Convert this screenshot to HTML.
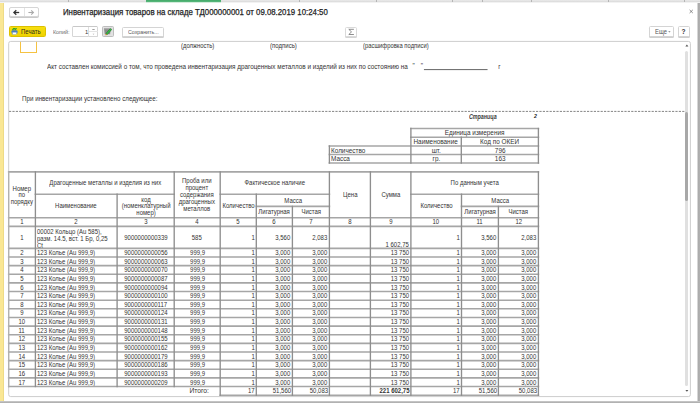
<!DOCTYPE html><html><head><meta charset="utf-8"><style>
html,body{margin:0;padding:0;width:700px;height:403px;overflow:hidden;background:#fff;font-family:"Liberation Sans", sans-serif;color:#333333;}
div{box-sizing:border-box;}
</style></head><body>
<div style="position:absolute;left:0px;top:0px;width:700px;height:3px;background:linear-gradient(#ebebeb 0,#d9d9d9 67%,#f0f0f0 67%,#f4f4f4 100%);"></div>
<div style="position:absolute;left:68px;top:0px;width:1px;height:2px;background:#b5b5b5;"></div>
<div style="position:absolute;left:299px;top:0px;width:1px;height:2px;background:#b5b5b5;"></div>
<div style="position:absolute;left:376px;top:0px;width:1px;height:2px;background:#b5b5b5;"></div>
<div style="position:absolute;left:452px;top:0px;width:1px;height:2px;background:#b5b5b5;"></div>
<div style="position:absolute;left:482px;top:0px;width:1px;height:2px;background:#b5b5b5;"></div>
<div style="position:absolute;left:531px;top:0px;width:1px;height:2px;background:#b5b5b5;"></div>
<div style="position:absolute;left:608px;top:0px;width:1px;height:2px;background:#b5b5b5;"></div>
<div style="position:absolute;left:684px;top:0px;width:1px;height:2px;background:#b5b5b5;"></div>
<div style="position:absolute;left:146px;top:0px;width:75px;height:3px;background:linear-gradient(#42a968 0,#5ab97d 67%,#c6e6d1 67%,#dff1e5 100%);"></div>
<div style="position:absolute;left:0px;top:3px;width:4px;height:398px;background:linear-gradient(90deg,#fae794 0,#fae794 75%,#eedb86 75%);"></div>
<div style="position:absolute;left:697px;top:3px;width:3px;height:400px;background:linear-gradient(90deg,#d6d6d6 0,#d6d6d6 33%,#aaaaaa 33%,#b0b0b0 100%);"></div>
<div style="position:absolute;left:0px;top:401px;width:700px;height:2px;background:linear-gradient(#cdcdcd,#a8a8a8);"></div>
<div style="position:absolute;left:9px;top:7px;width:30px;height:10px;border:1px solid #d6d6d6;border-radius:2px;background:#fff;box-shadow:0 1px 0 #c9c9c9;"></div>
<div style="position:absolute;left:24px;top:8px;width:1px;height:8px;background:#e4e4e4;"></div>
<svg style="position:absolute;left:0;top:0" width="40" height="20" viewBox="0 0 40 20"><path d="M14 12.5 H19.2" stroke="#333" stroke-width="1.3"/><path d="M16.3 10.2 L13.9 12.5 L16.3 14.8" stroke="#333" stroke-width="1.3" fill="none"/><path d="M28.4 12.5 H33.4" stroke="#aaa" stroke-width="1.1"/><path d="M31.2 10.4 L33.4 12.5 L31.2 14.6" stroke="#aaa" stroke-width="1.1" fill="none"/></svg>
<div style="position:absolute;left:62.5px;top:7.6px;white-space:nowrap;font-size:8.6px;line-height:9.89px;transform:scaleX(0.91);transform-origin:0 0;color:#1e1e1e;-webkit-text-stroke:0.25px #1e1e1e;">Инвентаризация товаров на складе ТД000000001 от 09.08.2019 10:24:50</div>
<svg style="position:absolute;left:680px;top:0" width="20" height="20" viewBox="680 0 20 20"><path d="M689.6 9.9 L692.8 13 M692.8 9.9 L689.6 13" stroke="#707070" stroke-width="0.8"/></svg>
<div style="position:absolute;left:9px;top:26px;width:37px;height:11px;background:linear-gradient(#f7df0f,#efd200);border:1px solid #dcc000;border-radius:1.5px;"></div>
<svg style="position:absolute;left:11px;top:28px" width="7" height="7" viewBox="0 0 7 7"><rect x="0.5" y="2.2" width="6" height="3.6" rx="1" fill="#4a7fc1"/><rect x="1.6" y="4.2" width="3.8" height="2.3" fill="#fff" stroke="#7a9bc8" stroke-width="0.4"/><path d="M1.5 2 L3 0.2 L4.2 1.4 L5.6 0.2" stroke="#2ca02c" stroke-width="1.2" fill="none"/></svg>
<div style="position:absolute;left:20.6px;top:28.2px;white-space:nowrap;font-size:6.8px;line-height:7.82px;transform:scaleX(0.88);transform-origin:0 0;color:#2e2c1c;">Печать</div>
<div style="position:absolute;left:53.3px;top:28.4px;white-space:nowrap;font-size:6.1px;line-height:7.01px;transform:scaleX(0.88);transform-origin:0 0;color:#6a6a6a;">Копий:</div>
<div style="position:absolute;left:72px;top:26px;width:26px;height:11px;border:1px solid #d6d6d6;border-top-color:#c8c8c8;border-radius:1.5px;background:#fff;"></div>
<div style="position:absolute;left:88.4px;top:27px;width:1px;height:10px;background:#dedede;"></div>
<div style="position:absolute;left:89px;top:31.3px;width:8.5px;height:1px;background:#e4e4e4;"></div>
<div style="position:absolute;left:85.4px;top:28.3px;white-space:nowrap;font-size:6.1px;line-height:7.01px;transform:scaleX(0.95);transform-origin:0 0;color:#3a3a3a;">1</div>
<svg style="position:absolute;left:89px;top:27px" width="9" height="10" viewBox="0 0 9 10"><path d="M3.3 2.0 H5.7 V2.8 H3.3Z" fill="#8a8a8a"/><path d="M3.6 6.8 L4.5 7.7 L5.4 6.8Z" fill="#aaa"/></svg>
<div style="position:absolute;left:101.6px;top:26px;width:12.2px;height:11px;border:1px solid #bdbdbd;border-radius:1.5px;background:#e2e2e2;"></div>
<svg style="position:absolute;left:103px;top:27px" width="10" height="10" viewBox="0 0 10 10"><path d="M1 1.2 H7.8 L7.1 7.2 H1.7 Z" fill="#8c8c8c"/><path d="M1.2 1.2 H7.6 L7.5 2.2 H1.3Z" fill="#b0b0b0"/><path d="M3.8 6.8 L7.7 2.5" stroke="#1f7a2a" stroke-width="2.1" stroke-linecap="round"/><path d="M3.9 6.7 L7.6 2.6" stroke="#3cc24c" stroke-width="1.1" stroke-linecap="round"/><path d="M2.6 8.2 L3.6 7" stroke="#d98a2a" stroke-width="1.1"/></svg>
<div style="position:absolute;left:122px;top:26.5px;width:42.2px;height:10.5px;border:1px solid #d4d4d4;border-radius:1.5px;background:#fff;box-shadow:0 1px 0 #cfcfcf;"></div>
<div style="position:absolute;left:128px;top:28.6px;white-space:nowrap;font-size:5.8px;line-height:6.67px;transform:scaleX(0.91);transform-origin:0 0;color:#555;">Сохранить...</div>
<div style="position:absolute;left:345.3px;top:26.5px;width:12px;height:10.5px;border:1px solid #dadada;border-radius:1.5px;background:#fff;box-shadow:0 1px 0 #d4d4d4;"></div>
<svg style="position:absolute;left:0;top:0" width="400" height="40" viewBox="0 0 400 40"><path d="M353.9 29.3 H348.8 L351.5 31.9 L348.8 34.5 H353.9" stroke="#7a7a7a" stroke-width="0.85" fill="none"/></svg>
<div style="position:absolute;left:649.4px;top:26.3px;width:24.6px;height:10.4px;border:1px solid #d4d4d4;border-radius:1.5px;background:#fff;box-shadow:0 1px 0 #cfcfcf;"></div>
<div style="position:absolute;left:655px;top:28.2px;white-space:nowrap;font-size:6.4px;line-height:7.36px;transform:scaleX(0.92);transform-origin:0 0;color:#555;">Еще</div>
<svg style="position:absolute;left:667px;top:30px" width="5" height="4" viewBox="0 0 5 4"><path d="M1.2 1.2 H3.6 L2.4 2.6Z" fill="#777"/></svg>
<div style="position:absolute;left:678px;top:26.3px;width:11.8px;height:10.4px;border:1px solid #d4d4d4;border-radius:1.5px;background:#fff;box-shadow:0 1px 0 #cfcfcf;"></div>
<div style="position:absolute;left:681.6px;top:28px;white-space:nowrap;font-size:6.6px;line-height:7.59px;color:#333;font-weight:bold;">?</div>
<div style="position:absolute;left:685.4px;top:51px;width:3px;height:334.5px;background:#e0e0e0;border-radius:1.5px;"></div>
<div style="position:absolute;left:685.4px;top:112px;width:3px;height:89px;background:#a8a8a8;border-radius:1.5px;"></div>
<div style="position:absolute;left:20px;top:41px;width:17px;height:11.8px;border:1px solid #f5c242;border-top:none;"></div>
<div style="position:absolute;left:180.6px;top:42.3px;white-space:nowrap;font-size:6.5px;line-height:7.47px;transform:scaleX(0.91);transform-origin:0 0;">(должность)</div>
<div style="position:absolute;left:269.8px;top:42.3px;white-space:nowrap;font-size:6.5px;line-height:7.47px;transform:scaleX(0.93);transform-origin:0 0;">(подпись)</div>
<div style="position:absolute;left:362.9px;top:42.3px;white-space:nowrap;font-size:6.5px;line-height:7.47px;transform:scaleX(0.9);transform-origin:0 0;">(расшифровка подписи)</div>
<div style="position:absolute;left:47.1px;top:62.8px;white-space:nowrap;font-size:7.7px;line-height:8.85px;transform:scaleX(0.824);transform-origin:0 0;">Акт составлен комиссией о том, что проведена инвентаризация драгоценных металлов и изделий из них по состоянию на</div>
<div style="position:absolute;left:412.4px;top:62.3px;white-space:nowrap;font-size:6.3px;line-height:7.24px;">"</div>
<div style="position:absolute;left:420.8px;top:62.3px;white-space:nowrap;font-size:6.3px;line-height:7.24px;">"</div>
<div style="position:absolute;left:498.3px;top:62.8px;white-space:nowrap;font-size:6.3px;line-height:7.24px;">г</div>
<div style="position:absolute;left:22.4px;top:94.7px;white-space:nowrap;font-size:7.7px;line-height:8.85px;transform:scaleX(0.81);transform-origin:0 0;">При инвентаризации установлено следующее:</div>
<div style="position:absolute;left:469.3px;top:113.0px;white-space:nowrap;font-size:6.6px;line-height:7.59px;transform:scaleX(0.81);transform-origin:0 0;font-weight:bold;font-style:italic;color:#3a3a3a;">Страница</div>
<div style="position:absolute;left:533.9px;top:112.9px;white-space:nowrap;font-size:5.2px;line-height:5.98px;font-weight:bold;font-style:italic;color:#222;">2</div>
<div style="position:absolute;left:410.90px;top:129.30px;width:127.50px;height:8.80px;display:flex;justify-content:center;align-items:center;text-align:center;padding:0 1.8px;font-size:7.4px;line-height:6.9px;"><span style="display:inline-block;white-space:nowrap;flex-shrink:0;transform:scaleX(0.865);transform-origin:50% 50%">Единица измерения</span></div>
<div style="position:absolute;left:410.90px;top:138.10px;width:50.40px;height:8.70px;display:flex;justify-content:center;align-items:center;text-align:center;padding:0 1.8px;font-size:7.4px;line-height:6.9px;"><span style="display:inline-block;white-space:nowrap;flex-shrink:0;transform:scaleX(0.865);transform-origin:50% 50%">Наименование</span></div>
<div style="position:absolute;left:461.30px;top:138.10px;width:77.10px;height:8.70px;display:flex;justify-content:center;align-items:center;text-align:center;padding:0 1.8px;font-size:7.4px;line-height:6.9px;"><span style="display:inline-block;white-space:nowrap;flex-shrink:0;transform:scaleX(0.865);transform-origin:50% 50%">Код по ОКЕИ</span></div>
<div style="position:absolute;left:329.40px;top:146.80px;width:81.50px;height:8.50px;display:flex;justify-content:flex-start;align-items:center;text-align:left;padding:0 1.8px;font-size:7.4px;line-height:6.9px;"><span style="display:inline-block;white-space:nowrap;flex-shrink:0;transform:scaleX(0.865);transform-origin:0 50%">Количество</span></div>
<div style="position:absolute;left:329.40px;top:155.30px;width:81.50px;height:8.50px;display:flex;justify-content:flex-start;align-items:center;text-align:left;padding:0 1.8px;font-size:7.4px;line-height:6.9px;"><span style="display:inline-block;white-space:nowrap;flex-shrink:0;transform:scaleX(0.865);transform-origin:0 50%">Масса</span></div>
<div style="position:absolute;left:410.90px;top:146.80px;width:50.40px;height:8.50px;display:flex;justify-content:center;align-items:center;text-align:center;padding:0 1.8px;font-size:7.4px;line-height:6.9px;"><span style="display:inline-block;white-space:nowrap;flex-shrink:0;transform:scaleX(0.865);transform-origin:50% 50%">шт.</span></div>
<div style="position:absolute;left:410.90px;top:155.30px;width:50.40px;height:8.50px;display:flex;justify-content:center;align-items:center;text-align:center;padding:0 1.8px;font-size:7.4px;line-height:6.9px;"><span style="display:inline-block;white-space:nowrap;flex-shrink:0;transform:scaleX(0.865);transform-origin:50% 50%">гр.</span></div>
<div style="position:absolute;left:461.30px;top:146.80px;width:77.10px;height:8.50px;display:flex;justify-content:center;align-items:center;text-align:center;padding:0 1.8px;font-size:7.4px;line-height:6.9px;"><span style="display:inline-block;white-space:nowrap;flex-shrink:0;transform:scaleX(0.865);transform-origin:50% 50%">796</span></div>
<div style="position:absolute;left:461.30px;top:155.30px;width:77.10px;height:8.50px;display:flex;justify-content:center;align-items:center;text-align:center;padding:0 1.8px;font-size:7.4px;line-height:6.9px;"><span style="display:inline-block;white-space:nowrap;flex-shrink:0;transform:scaleX(0.865);transform-origin:50% 50%">163</span></div>
<div style="position:absolute;left:8.70px;top:172.70px;width:26.70px;height:45.90px;display:flex;justify-content:center;align-items:center;text-align:center;padding:0 1.8px;font-size:6.9px;line-height:6.7px;"><span style="display:inline-block;white-space:nowrap;flex-shrink:0;transform:scaleX(0.87);transform-origin:50% 50%">Номер<br>по<br>порядку</span></div>
<div style="position:absolute;left:35.40px;top:172.70px;width:138.80px;height:22.30px;display:flex;justify-content:center;align-items:center;text-align:center;padding:0 1.8px;font-size:6.9px;line-height:6.9px;"><span style="display:inline-block;white-space:nowrap;flex-shrink:0;transform:scaleX(0.87);transform-origin:50% 50%">Драгоценные металлы и изделия из них</span></div>
<div style="position:absolute;left:35.40px;top:195.00px;width:81.70px;height:23.60px;display:flex;justify-content:center;align-items:center;text-align:center;padding:0 1.8px;font-size:6.9px;line-height:6.9px;"><span style="display:inline-block;white-space:nowrap;flex-shrink:0;transform:scaleX(0.87);transform-origin:50% 50%">Наименование</span></div>
<div style="position:absolute;left:117.10px;top:195.00px;width:57.10px;height:23.60px;display:flex;justify-content:center;align-items:center;text-align:center;padding:0 1.8px;font-size:6.9px;line-height:6.7px;"><span style="display:inline-block;white-space:nowrap;flex-shrink:0;transform:scaleX(0.87);transform-origin:50% 50%">код<br>(номенклатурный<br>номер)</span></div>
<div style="position:absolute;left:174.20px;top:172.70px;width:46.00px;height:45.90px;display:flex;justify-content:center;align-items:center;text-align:center;padding:0 1.8px;font-size:6.9px;line-height:6.9px;"><span style="display:inline-block;white-space:nowrap;flex-shrink:0;transform:scaleX(0.87);transform-origin:50% 50%">Проба или<br>процент<br>содержания<br>драгоценных<br>металлов</span></div>
<div style="position:absolute;left:220.20px;top:172.70px;width:109.20px;height:22.30px;display:flex;justify-content:center;align-items:center;text-align:center;padding:0 1.8px;font-size:6.9px;line-height:6.9px;"><span style="display:inline-block;white-space:nowrap;flex-shrink:0;transform:scaleX(0.87);transform-origin:50% 50%">Фактическое наличие</span></div>
<div style="position:absolute;left:220.20px;top:195.00px;width:36.10px;height:23.60px;display:flex;justify-content:center;align-items:center;text-align:center;padding:0 1.8px;font-size:6.9px;line-height:6.9px;"><span style="display:inline-block;white-space:nowrap;flex-shrink:0;transform:scaleX(0.87);transform-origin:50% 50%">Количество</span></div>
<div style="position:absolute;left:256.30px;top:195.00px;width:73.10px;height:12.20px;display:flex;justify-content:center;align-items:center;text-align:center;padding:0 1.8px;font-size:6.9px;line-height:6.9px;"><span style="display:inline-block;white-space:nowrap;flex-shrink:0;transform:scaleX(0.87);transform-origin:50% 50%">Масса</span></div>
<div style="position:absolute;left:256.30px;top:207.20px;width:36.10px;height:11.40px;display:flex;justify-content:center;align-items:center;text-align:center;padding:0 1.8px;font-size:6.9px;line-height:6.9px;"><span style="display:inline-block;white-space:nowrap;flex-shrink:0;transform:scaleX(0.87);transform-origin:50% 50%">Лигатурная</span></div>
<div style="position:absolute;left:292.40px;top:207.20px;width:37.00px;height:11.40px;display:flex;justify-content:center;align-items:center;text-align:center;padding:0 1.8px;font-size:6.9px;line-height:6.9px;"><span style="display:inline-block;white-space:nowrap;flex-shrink:0;transform:scaleX(0.87);transform-origin:50% 50%">Чистая</span></div>
<div style="position:absolute;left:329.40px;top:172.70px;width:41.00px;height:45.90px;display:flex;justify-content:center;align-items:center;text-align:center;padding:0 1.8px;font-size:6.9px;line-height:6.9px;"><span style="display:inline-block;white-space:nowrap;flex-shrink:0;transform:scaleX(0.87);transform-origin:50% 50%">Цена</span></div>
<div style="position:absolute;left:370.40px;top:172.70px;width:40.50px;height:45.90px;display:flex;justify-content:center;align-items:center;text-align:center;padding:0 1.8px;font-size:6.9px;line-height:6.9px;"><span style="display:inline-block;white-space:nowrap;flex-shrink:0;transform:scaleX(0.87);transform-origin:50% 50%">Сумма</span></div>
<div style="position:absolute;left:410.90px;top:172.70px;width:127.50px;height:22.30px;display:flex;justify-content:center;align-items:center;text-align:center;padding:0 1.8px;font-size:6.9px;line-height:6.9px;"><span style="display:inline-block;white-space:nowrap;flex-shrink:0;transform:scaleX(0.87);transform-origin:50% 50%">По данным учета</span></div>
<div style="position:absolute;left:410.90px;top:195.00px;width:50.60px;height:23.60px;display:flex;justify-content:center;align-items:center;text-align:center;padding:0 1.8px;font-size:6.9px;line-height:6.9px;"><span style="display:inline-block;white-space:nowrap;flex-shrink:0;transform:scaleX(0.87);transform-origin:50% 50%">Количество</span></div>
<div style="position:absolute;left:461.50px;top:195.00px;width:76.90px;height:12.20px;display:flex;justify-content:center;align-items:center;text-align:center;padding:0 1.8px;font-size:6.9px;line-height:6.9px;"><span style="display:inline-block;white-space:nowrap;flex-shrink:0;transform:scaleX(0.87);transform-origin:50% 50%">Масса</span></div>
<div style="position:absolute;left:461.50px;top:207.20px;width:36.90px;height:11.40px;display:flex;justify-content:center;align-items:center;text-align:center;padding:0 1.8px;font-size:6.9px;line-height:6.9px;"><span style="display:inline-block;white-space:nowrap;flex-shrink:0;transform:scaleX(0.87);transform-origin:50% 50%">Лигатурная</span></div>
<div style="position:absolute;left:498.40px;top:207.20px;width:40.00px;height:11.40px;display:flex;justify-content:center;align-items:center;text-align:center;padding:0 1.8px;font-size:6.9px;line-height:6.9px;"><span style="display:inline-block;white-space:nowrap;flex-shrink:0;transform:scaleX(0.87);transform-origin:50% 50%">Чистая</span></div>
<div style="position:absolute;left:8.70px;top:218.60px;width:26.70px;height:8.60px;display:flex;justify-content:center;align-items:center;text-align:center;padding:0 1.8px;font-size:6.9px;line-height:6.9px;"><span style="display:inline-block;white-space:nowrap;flex-shrink:0;transform:scaleX(0.87);transform-origin:50% 50%">1</span></div>
<div style="position:absolute;left:35.40px;top:218.60px;width:81.70px;height:8.60px;display:flex;justify-content:center;align-items:center;text-align:center;padding:0 1.8px;font-size:6.9px;line-height:6.9px;"><span style="display:inline-block;white-space:nowrap;flex-shrink:0;transform:scaleX(0.87);transform-origin:50% 50%">2</span></div>
<div style="position:absolute;left:117.10px;top:218.60px;width:57.10px;height:8.60px;display:flex;justify-content:center;align-items:center;text-align:center;padding:0 1.8px;font-size:6.9px;line-height:6.9px;"><span style="display:inline-block;white-space:nowrap;flex-shrink:0;transform:scaleX(0.87);transform-origin:50% 50%">3</span></div>
<div style="position:absolute;left:174.20px;top:218.60px;width:46.00px;height:8.60px;display:flex;justify-content:center;align-items:center;text-align:center;padding:0 1.8px;font-size:6.9px;line-height:6.9px;"><span style="display:inline-block;white-space:nowrap;flex-shrink:0;transform:scaleX(0.87);transform-origin:50% 50%">4</span></div>
<div style="position:absolute;left:220.20px;top:218.60px;width:36.10px;height:8.60px;display:flex;justify-content:center;align-items:center;text-align:center;padding:0 1.8px;font-size:6.9px;line-height:6.9px;"><span style="display:inline-block;white-space:nowrap;flex-shrink:0;transform:scaleX(0.87);transform-origin:50% 50%">5</span></div>
<div style="position:absolute;left:256.30px;top:218.60px;width:36.10px;height:8.60px;display:flex;justify-content:center;align-items:center;text-align:center;padding:0 1.8px;font-size:6.9px;line-height:6.9px;"><span style="display:inline-block;white-space:nowrap;flex-shrink:0;transform:scaleX(0.87);transform-origin:50% 50%">6</span></div>
<div style="position:absolute;left:292.40px;top:218.60px;width:37.00px;height:8.60px;display:flex;justify-content:center;align-items:center;text-align:center;padding:0 1.8px;font-size:6.9px;line-height:6.9px;"><span style="display:inline-block;white-space:nowrap;flex-shrink:0;transform:scaleX(0.87);transform-origin:50% 50%">7</span></div>
<div style="position:absolute;left:329.40px;top:218.60px;width:41.00px;height:8.60px;display:flex;justify-content:center;align-items:center;text-align:center;padding:0 1.8px;font-size:6.9px;line-height:6.9px;"><span style="display:inline-block;white-space:nowrap;flex-shrink:0;transform:scaleX(0.87);transform-origin:50% 50%">8</span></div>
<div style="position:absolute;left:370.40px;top:218.60px;width:40.50px;height:8.60px;display:flex;justify-content:center;align-items:center;text-align:center;padding:0 1.8px;font-size:6.9px;line-height:6.9px;"><span style="display:inline-block;white-space:nowrap;flex-shrink:0;transform:scaleX(0.87);transform-origin:50% 50%">9</span></div>
<div style="position:absolute;left:410.90px;top:218.60px;width:50.60px;height:8.60px;display:flex;justify-content:center;align-items:center;text-align:center;padding:0 1.8px;font-size:6.9px;line-height:6.9px;"><span style="display:inline-block;white-space:nowrap;flex-shrink:0;transform:scaleX(0.87);transform-origin:50% 50%">10</span></div>
<div style="position:absolute;left:461.50px;top:218.60px;width:36.90px;height:8.60px;display:flex;justify-content:center;align-items:center;text-align:center;padding:0 1.8px;font-size:6.9px;line-height:6.9px;"><span style="display:inline-block;white-space:nowrap;flex-shrink:0;transform:scaleX(0.87);transform-origin:50% 50%">11</span></div>
<div style="position:absolute;left:498.40px;top:218.60px;width:40.00px;height:8.60px;display:flex;justify-content:center;align-items:center;text-align:center;padding:0 1.8px;font-size:6.9px;line-height:6.9px;"><span style="display:inline-block;white-space:nowrap;flex-shrink:0;transform:scaleX(0.87);transform-origin:50% 50%">12</span></div>
<div style="position:absolute;left:8.70px;top:227.20px;width:26.70px;height:22.00px;display:flex;justify-content:center;align-items:center;text-align:center;padding:0 1.8px;font-size:6.9px;line-height:6.9px;"><span style="display:inline-block;white-space:nowrap;flex-shrink:0;transform:scaleX(0.87);transform-origin:50% 50%">1</span></div>
<div style="position:absolute;left:35.40px;top:227.20px;width:81.70px;height:22.00px;display:flex;justify-content:flex-start;align-items:center;text-align:left;padding:0 1.8px;font-size:6.9px;line-height:7.0px;"><span style="display:inline-block;white-space:nowrap;flex-shrink:0;transform:scaleX(0.87);transform-origin:0 50%">00002 Кольцо (Au 585),<br>разм. 14.5, вст. 1 Бр, 0,25<br>Ct</span></div>
<div style="position:absolute;left:117.10px;top:227.20px;width:57.10px;height:22.00px;display:flex;justify-content:center;align-items:center;text-align:center;padding:0 1.8px;font-size:6.9px;line-height:6.9px;"><span style="display:inline-block;white-space:nowrap;flex-shrink:0;transform:scaleX(0.87);transform-origin:50% 50%">9000000000339</span></div>
<div style="position:absolute;left:174.20px;top:227.20px;width:46.00px;height:22.00px;display:flex;justify-content:center;align-items:center;text-align:center;padding:0 1.8px;font-size:6.9px;line-height:6.9px;"><span style="display:inline-block;white-space:nowrap;flex-shrink:0;transform:scaleX(0.87);transform-origin:50% 50%">585</span></div>
<div style="position:absolute;left:220.20px;top:227.20px;width:36.10px;height:22.00px;display:flex;justify-content:flex-end;align-items:center;text-align:right;padding:0 1.8px;font-size:6.9px;line-height:6.9px;"><span style="display:inline-block;white-space:nowrap;flex-shrink:0;transform:scaleX(0.87);transform-origin:100% 50%">1</span></div>
<div style="position:absolute;left:256.30px;top:227.20px;width:36.10px;height:22.00px;display:flex;justify-content:flex-end;align-items:center;text-align:right;padding:0 1.8px;font-size:6.9px;line-height:6.9px;"><span style="display:inline-block;white-space:nowrap;flex-shrink:0;transform:scaleX(0.87);transform-origin:100% 50%">3,560</span></div>
<div style="position:absolute;left:292.40px;top:227.20px;width:37.00px;height:22.00px;display:flex;justify-content:flex-end;align-items:center;text-align:right;padding:0 1.8px;font-size:6.9px;line-height:6.9px;"><span style="display:inline-block;white-space:nowrap;flex-shrink:0;transform:scaleX(0.87);transform-origin:100% 50%">2,083</span></div>
<div style="position:absolute;left:370.40px;top:227.20px;width:40.50px;height:22.00px;display:flex;justify-content:flex-end;align-items:flex-end;text-align:right;padding:0 1.8px;font-size:6.9px;line-height:6.9px;"><span style="display:inline-block;white-space:nowrap;flex-shrink:0;transform:scaleX(0.87);transform-origin:100% 50%">1 602,75</span></div>
<div style="position:absolute;left:410.90px;top:227.20px;width:50.60px;height:22.00px;display:flex;justify-content:flex-end;align-items:center;text-align:right;padding:0 1.8px;font-size:6.9px;line-height:6.9px;"><span style="display:inline-block;white-space:nowrap;flex-shrink:0;transform:scaleX(0.87);transform-origin:100% 50%">1</span></div>
<div style="position:absolute;left:461.50px;top:227.20px;width:36.90px;height:22.00px;display:flex;justify-content:flex-end;align-items:center;text-align:right;padding:0 1.8px;font-size:6.9px;line-height:6.9px;"><span style="display:inline-block;white-space:nowrap;flex-shrink:0;transform:scaleX(0.87);transform-origin:100% 50%">3,560</span></div>
<div style="position:absolute;left:498.40px;top:227.20px;width:40.00px;height:22.00px;display:flex;justify-content:flex-end;align-items:center;text-align:right;padding:0 1.8px;font-size:6.9px;line-height:6.9px;"><span style="display:inline-block;white-space:nowrap;flex-shrink:0;transform:scaleX(0.87);transform-origin:100% 50%">2,083</span></div>
<div style="position:absolute;left:8.70px;top:249.20px;width:26.70px;height:8.63px;display:flex;justify-content:center;align-items:center;text-align:center;padding:0 1.8px;font-size:6.9px;line-height:6.9px;"><span style="display:inline-block;white-space:nowrap;flex-shrink:0;transform:scaleX(0.87);transform-origin:50% 50%">2</span></div>
<div style="position:absolute;left:35.40px;top:249.20px;width:81.70px;height:8.63px;display:flex;justify-content:flex-start;align-items:center;text-align:left;padding:0 1.8px;font-size:6.9px;line-height:6.9px;"><span style="display:inline-block;white-space:nowrap;flex-shrink:0;transform:scaleX(0.87);transform-origin:0 50%">123 Колье (Au 999,9)</span></div>
<div style="position:absolute;left:117.10px;top:249.20px;width:57.10px;height:8.63px;display:flex;justify-content:center;align-items:center;text-align:center;padding:0 1.8px;font-size:6.9px;line-height:6.9px;"><span style="display:inline-block;white-space:nowrap;flex-shrink:0;transform:scaleX(0.87);transform-origin:50% 50%">9000000000056</span></div>
<div style="position:absolute;left:174.20px;top:249.20px;width:46.00px;height:8.63px;display:flex;justify-content:center;align-items:center;text-align:center;padding:0 1.8px;font-size:6.9px;line-height:6.9px;"><span style="display:inline-block;white-space:nowrap;flex-shrink:0;transform:scaleX(0.87);transform-origin:50% 50%">999,9</span></div>
<div style="position:absolute;left:220.20px;top:249.20px;width:36.10px;height:8.63px;display:flex;justify-content:flex-end;align-items:center;text-align:right;padding:0 1.8px;font-size:6.9px;line-height:6.9px;"><span style="display:inline-block;white-space:nowrap;flex-shrink:0;transform:scaleX(0.87);transform-origin:100% 50%">1</span></div>
<div style="position:absolute;left:256.30px;top:249.20px;width:36.10px;height:8.63px;display:flex;justify-content:flex-end;align-items:center;text-align:right;padding:0 1.8px;font-size:6.9px;line-height:6.9px;"><span style="display:inline-block;white-space:nowrap;flex-shrink:0;transform:scaleX(0.87);transform-origin:100% 50%">3,000</span></div>
<div style="position:absolute;left:292.40px;top:249.20px;width:37.00px;height:8.63px;display:flex;justify-content:flex-end;align-items:center;text-align:right;padding:0 1.8px;font-size:6.9px;line-height:6.9px;"><span style="display:inline-block;white-space:nowrap;flex-shrink:0;transform:scaleX(0.87);transform-origin:100% 50%">3,000</span></div>
<div style="position:absolute;left:370.40px;top:249.20px;width:40.50px;height:8.63px;display:flex;justify-content:flex-end;align-items:center;text-align:right;padding:0 1.8px;font-size:6.9px;line-height:6.9px;"><span style="display:inline-block;white-space:nowrap;flex-shrink:0;transform:scaleX(0.87);transform-origin:100% 50%">13 750</span></div>
<div style="position:absolute;left:410.90px;top:249.20px;width:50.60px;height:8.63px;display:flex;justify-content:flex-end;align-items:center;text-align:right;padding:0 1.8px;font-size:6.9px;line-height:6.9px;"><span style="display:inline-block;white-space:nowrap;flex-shrink:0;transform:scaleX(0.87);transform-origin:100% 50%">1</span></div>
<div style="position:absolute;left:461.50px;top:249.20px;width:36.90px;height:8.63px;display:flex;justify-content:flex-end;align-items:center;text-align:right;padding:0 1.8px;font-size:6.9px;line-height:6.9px;"><span style="display:inline-block;white-space:nowrap;flex-shrink:0;transform:scaleX(0.87);transform-origin:100% 50%">3,000</span></div>
<div style="position:absolute;left:498.40px;top:249.20px;width:40.00px;height:8.63px;display:flex;justify-content:flex-end;align-items:center;text-align:right;padding:0 1.8px;font-size:6.9px;line-height:6.9px;"><span style="display:inline-block;white-space:nowrap;flex-shrink:0;transform:scaleX(0.87);transform-origin:100% 50%">3,000</span></div>
<div style="position:absolute;left:8.70px;top:257.83px;width:26.70px;height:8.63px;display:flex;justify-content:center;align-items:center;text-align:center;padding:0 1.8px;font-size:6.9px;line-height:6.9px;"><span style="display:inline-block;white-space:nowrap;flex-shrink:0;transform:scaleX(0.87);transform-origin:50% 50%">3</span></div>
<div style="position:absolute;left:35.40px;top:257.83px;width:81.70px;height:8.63px;display:flex;justify-content:flex-start;align-items:center;text-align:left;padding:0 1.8px;font-size:6.9px;line-height:6.9px;"><span style="display:inline-block;white-space:nowrap;flex-shrink:0;transform:scaleX(0.87);transform-origin:0 50%">123 Колье (Au 999,9)</span></div>
<div style="position:absolute;left:117.10px;top:257.83px;width:57.10px;height:8.63px;display:flex;justify-content:center;align-items:center;text-align:center;padding:0 1.8px;font-size:6.9px;line-height:6.9px;"><span style="display:inline-block;white-space:nowrap;flex-shrink:0;transform:scaleX(0.87);transform-origin:50% 50%">9000000000063</span></div>
<div style="position:absolute;left:174.20px;top:257.83px;width:46.00px;height:8.63px;display:flex;justify-content:center;align-items:center;text-align:center;padding:0 1.8px;font-size:6.9px;line-height:6.9px;"><span style="display:inline-block;white-space:nowrap;flex-shrink:0;transform:scaleX(0.87);transform-origin:50% 50%">999,9</span></div>
<div style="position:absolute;left:220.20px;top:257.83px;width:36.10px;height:8.63px;display:flex;justify-content:flex-end;align-items:center;text-align:right;padding:0 1.8px;font-size:6.9px;line-height:6.9px;"><span style="display:inline-block;white-space:nowrap;flex-shrink:0;transform:scaleX(0.87);transform-origin:100% 50%">1</span></div>
<div style="position:absolute;left:256.30px;top:257.83px;width:36.10px;height:8.63px;display:flex;justify-content:flex-end;align-items:center;text-align:right;padding:0 1.8px;font-size:6.9px;line-height:6.9px;"><span style="display:inline-block;white-space:nowrap;flex-shrink:0;transform:scaleX(0.87);transform-origin:100% 50%">3,000</span></div>
<div style="position:absolute;left:292.40px;top:257.83px;width:37.00px;height:8.63px;display:flex;justify-content:flex-end;align-items:center;text-align:right;padding:0 1.8px;font-size:6.9px;line-height:6.9px;"><span style="display:inline-block;white-space:nowrap;flex-shrink:0;transform:scaleX(0.87);transform-origin:100% 50%">3,000</span></div>
<div style="position:absolute;left:370.40px;top:257.83px;width:40.50px;height:8.63px;display:flex;justify-content:flex-end;align-items:center;text-align:right;padding:0 1.8px;font-size:6.9px;line-height:6.9px;"><span style="display:inline-block;white-space:nowrap;flex-shrink:0;transform:scaleX(0.87);transform-origin:100% 50%">13 750</span></div>
<div style="position:absolute;left:410.90px;top:257.83px;width:50.60px;height:8.63px;display:flex;justify-content:flex-end;align-items:center;text-align:right;padding:0 1.8px;font-size:6.9px;line-height:6.9px;"><span style="display:inline-block;white-space:nowrap;flex-shrink:0;transform:scaleX(0.87);transform-origin:100% 50%">1</span></div>
<div style="position:absolute;left:461.50px;top:257.83px;width:36.90px;height:8.63px;display:flex;justify-content:flex-end;align-items:center;text-align:right;padding:0 1.8px;font-size:6.9px;line-height:6.9px;"><span style="display:inline-block;white-space:nowrap;flex-shrink:0;transform:scaleX(0.87);transform-origin:100% 50%">3,000</span></div>
<div style="position:absolute;left:498.40px;top:257.83px;width:40.00px;height:8.63px;display:flex;justify-content:flex-end;align-items:center;text-align:right;padding:0 1.8px;font-size:6.9px;line-height:6.9px;"><span style="display:inline-block;white-space:nowrap;flex-shrink:0;transform:scaleX(0.87);transform-origin:100% 50%">3,000</span></div>
<div style="position:absolute;left:8.70px;top:266.46px;width:26.70px;height:8.63px;display:flex;justify-content:center;align-items:center;text-align:center;padding:0 1.8px;font-size:6.9px;line-height:6.9px;"><span style="display:inline-block;white-space:nowrap;flex-shrink:0;transform:scaleX(0.87);transform-origin:50% 50%">4</span></div>
<div style="position:absolute;left:35.40px;top:266.46px;width:81.70px;height:8.63px;display:flex;justify-content:flex-start;align-items:center;text-align:left;padding:0 1.8px;font-size:6.9px;line-height:6.9px;"><span style="display:inline-block;white-space:nowrap;flex-shrink:0;transform:scaleX(0.87);transform-origin:0 50%">123 Колье (Au 999,9)</span></div>
<div style="position:absolute;left:117.10px;top:266.46px;width:57.10px;height:8.63px;display:flex;justify-content:center;align-items:center;text-align:center;padding:0 1.8px;font-size:6.9px;line-height:6.9px;"><span style="display:inline-block;white-space:nowrap;flex-shrink:0;transform:scaleX(0.87);transform-origin:50% 50%">9000000000070</span></div>
<div style="position:absolute;left:174.20px;top:266.46px;width:46.00px;height:8.63px;display:flex;justify-content:center;align-items:center;text-align:center;padding:0 1.8px;font-size:6.9px;line-height:6.9px;"><span style="display:inline-block;white-space:nowrap;flex-shrink:0;transform:scaleX(0.87);transform-origin:50% 50%">999,9</span></div>
<div style="position:absolute;left:220.20px;top:266.46px;width:36.10px;height:8.63px;display:flex;justify-content:flex-end;align-items:center;text-align:right;padding:0 1.8px;font-size:6.9px;line-height:6.9px;"><span style="display:inline-block;white-space:nowrap;flex-shrink:0;transform:scaleX(0.87);transform-origin:100% 50%">1</span></div>
<div style="position:absolute;left:256.30px;top:266.46px;width:36.10px;height:8.63px;display:flex;justify-content:flex-end;align-items:center;text-align:right;padding:0 1.8px;font-size:6.9px;line-height:6.9px;"><span style="display:inline-block;white-space:nowrap;flex-shrink:0;transform:scaleX(0.87);transform-origin:100% 50%">3,000</span></div>
<div style="position:absolute;left:292.40px;top:266.46px;width:37.00px;height:8.63px;display:flex;justify-content:flex-end;align-items:center;text-align:right;padding:0 1.8px;font-size:6.9px;line-height:6.9px;"><span style="display:inline-block;white-space:nowrap;flex-shrink:0;transform:scaleX(0.87);transform-origin:100% 50%">3,000</span></div>
<div style="position:absolute;left:370.40px;top:266.46px;width:40.50px;height:8.63px;display:flex;justify-content:flex-end;align-items:center;text-align:right;padding:0 1.8px;font-size:6.9px;line-height:6.9px;"><span style="display:inline-block;white-space:nowrap;flex-shrink:0;transform:scaleX(0.87);transform-origin:100% 50%">13 750</span></div>
<div style="position:absolute;left:410.90px;top:266.46px;width:50.60px;height:8.63px;display:flex;justify-content:flex-end;align-items:center;text-align:right;padding:0 1.8px;font-size:6.9px;line-height:6.9px;"><span style="display:inline-block;white-space:nowrap;flex-shrink:0;transform:scaleX(0.87);transform-origin:100% 50%">1</span></div>
<div style="position:absolute;left:461.50px;top:266.46px;width:36.90px;height:8.63px;display:flex;justify-content:flex-end;align-items:center;text-align:right;padding:0 1.8px;font-size:6.9px;line-height:6.9px;"><span style="display:inline-block;white-space:nowrap;flex-shrink:0;transform:scaleX(0.87);transform-origin:100% 50%">3,000</span></div>
<div style="position:absolute;left:498.40px;top:266.46px;width:40.00px;height:8.63px;display:flex;justify-content:flex-end;align-items:center;text-align:right;padding:0 1.8px;font-size:6.9px;line-height:6.9px;"><span style="display:inline-block;white-space:nowrap;flex-shrink:0;transform:scaleX(0.87);transform-origin:100% 50%">3,000</span></div>
<div style="position:absolute;left:8.70px;top:275.09px;width:26.70px;height:8.63px;display:flex;justify-content:center;align-items:center;text-align:center;padding:0 1.8px;font-size:6.9px;line-height:6.9px;"><span style="display:inline-block;white-space:nowrap;flex-shrink:0;transform:scaleX(0.87);transform-origin:50% 50%">5</span></div>
<div style="position:absolute;left:35.40px;top:275.09px;width:81.70px;height:8.63px;display:flex;justify-content:flex-start;align-items:center;text-align:left;padding:0 1.8px;font-size:6.9px;line-height:6.9px;"><span style="display:inline-block;white-space:nowrap;flex-shrink:0;transform:scaleX(0.87);transform-origin:0 50%">123 Колье (Au 999,9)</span></div>
<div style="position:absolute;left:117.10px;top:275.09px;width:57.10px;height:8.63px;display:flex;justify-content:center;align-items:center;text-align:center;padding:0 1.8px;font-size:6.9px;line-height:6.9px;"><span style="display:inline-block;white-space:nowrap;flex-shrink:0;transform:scaleX(0.87);transform-origin:50% 50%">9000000000087</span></div>
<div style="position:absolute;left:174.20px;top:275.09px;width:46.00px;height:8.63px;display:flex;justify-content:center;align-items:center;text-align:center;padding:0 1.8px;font-size:6.9px;line-height:6.9px;"><span style="display:inline-block;white-space:nowrap;flex-shrink:0;transform:scaleX(0.87);transform-origin:50% 50%">999,9</span></div>
<div style="position:absolute;left:220.20px;top:275.09px;width:36.10px;height:8.63px;display:flex;justify-content:flex-end;align-items:center;text-align:right;padding:0 1.8px;font-size:6.9px;line-height:6.9px;"><span style="display:inline-block;white-space:nowrap;flex-shrink:0;transform:scaleX(0.87);transform-origin:100% 50%">1</span></div>
<div style="position:absolute;left:256.30px;top:275.09px;width:36.10px;height:8.63px;display:flex;justify-content:flex-end;align-items:center;text-align:right;padding:0 1.8px;font-size:6.9px;line-height:6.9px;"><span style="display:inline-block;white-space:nowrap;flex-shrink:0;transform:scaleX(0.87);transform-origin:100% 50%">3,000</span></div>
<div style="position:absolute;left:292.40px;top:275.09px;width:37.00px;height:8.63px;display:flex;justify-content:flex-end;align-items:center;text-align:right;padding:0 1.8px;font-size:6.9px;line-height:6.9px;"><span style="display:inline-block;white-space:nowrap;flex-shrink:0;transform:scaleX(0.87);transform-origin:100% 50%">3,000</span></div>
<div style="position:absolute;left:370.40px;top:275.09px;width:40.50px;height:8.63px;display:flex;justify-content:flex-end;align-items:center;text-align:right;padding:0 1.8px;font-size:6.9px;line-height:6.9px;"><span style="display:inline-block;white-space:nowrap;flex-shrink:0;transform:scaleX(0.87);transform-origin:100% 50%">13 750</span></div>
<div style="position:absolute;left:410.90px;top:275.09px;width:50.60px;height:8.63px;display:flex;justify-content:flex-end;align-items:center;text-align:right;padding:0 1.8px;font-size:6.9px;line-height:6.9px;"><span style="display:inline-block;white-space:nowrap;flex-shrink:0;transform:scaleX(0.87);transform-origin:100% 50%">1</span></div>
<div style="position:absolute;left:461.50px;top:275.09px;width:36.90px;height:8.63px;display:flex;justify-content:flex-end;align-items:center;text-align:right;padding:0 1.8px;font-size:6.9px;line-height:6.9px;"><span style="display:inline-block;white-space:nowrap;flex-shrink:0;transform:scaleX(0.87);transform-origin:100% 50%">3,000</span></div>
<div style="position:absolute;left:498.40px;top:275.09px;width:40.00px;height:8.63px;display:flex;justify-content:flex-end;align-items:center;text-align:right;padding:0 1.8px;font-size:6.9px;line-height:6.9px;"><span style="display:inline-block;white-space:nowrap;flex-shrink:0;transform:scaleX(0.87);transform-origin:100% 50%">3,000</span></div>
<div style="position:absolute;left:8.70px;top:283.72px;width:26.70px;height:8.63px;display:flex;justify-content:center;align-items:center;text-align:center;padding:0 1.8px;font-size:6.9px;line-height:6.9px;"><span style="display:inline-block;white-space:nowrap;flex-shrink:0;transform:scaleX(0.87);transform-origin:50% 50%">6</span></div>
<div style="position:absolute;left:35.40px;top:283.72px;width:81.70px;height:8.63px;display:flex;justify-content:flex-start;align-items:center;text-align:left;padding:0 1.8px;font-size:6.9px;line-height:6.9px;"><span style="display:inline-block;white-space:nowrap;flex-shrink:0;transform:scaleX(0.87);transform-origin:0 50%">123 Колье (Au 999,9)</span></div>
<div style="position:absolute;left:117.10px;top:283.72px;width:57.10px;height:8.63px;display:flex;justify-content:center;align-items:center;text-align:center;padding:0 1.8px;font-size:6.9px;line-height:6.9px;"><span style="display:inline-block;white-space:nowrap;flex-shrink:0;transform:scaleX(0.87);transform-origin:50% 50%">9000000000094</span></div>
<div style="position:absolute;left:174.20px;top:283.72px;width:46.00px;height:8.63px;display:flex;justify-content:center;align-items:center;text-align:center;padding:0 1.8px;font-size:6.9px;line-height:6.9px;"><span style="display:inline-block;white-space:nowrap;flex-shrink:0;transform:scaleX(0.87);transform-origin:50% 50%">999,9</span></div>
<div style="position:absolute;left:220.20px;top:283.72px;width:36.10px;height:8.63px;display:flex;justify-content:flex-end;align-items:center;text-align:right;padding:0 1.8px;font-size:6.9px;line-height:6.9px;"><span style="display:inline-block;white-space:nowrap;flex-shrink:0;transform:scaleX(0.87);transform-origin:100% 50%">1</span></div>
<div style="position:absolute;left:256.30px;top:283.72px;width:36.10px;height:8.63px;display:flex;justify-content:flex-end;align-items:center;text-align:right;padding:0 1.8px;font-size:6.9px;line-height:6.9px;"><span style="display:inline-block;white-space:nowrap;flex-shrink:0;transform:scaleX(0.87);transform-origin:100% 50%">3,000</span></div>
<div style="position:absolute;left:292.40px;top:283.72px;width:37.00px;height:8.63px;display:flex;justify-content:flex-end;align-items:center;text-align:right;padding:0 1.8px;font-size:6.9px;line-height:6.9px;"><span style="display:inline-block;white-space:nowrap;flex-shrink:0;transform:scaleX(0.87);transform-origin:100% 50%">3,000</span></div>
<div style="position:absolute;left:370.40px;top:283.72px;width:40.50px;height:8.63px;display:flex;justify-content:flex-end;align-items:center;text-align:right;padding:0 1.8px;font-size:6.9px;line-height:6.9px;"><span style="display:inline-block;white-space:nowrap;flex-shrink:0;transform:scaleX(0.87);transform-origin:100% 50%">13 750</span></div>
<div style="position:absolute;left:410.90px;top:283.72px;width:50.60px;height:8.63px;display:flex;justify-content:flex-end;align-items:center;text-align:right;padding:0 1.8px;font-size:6.9px;line-height:6.9px;"><span style="display:inline-block;white-space:nowrap;flex-shrink:0;transform:scaleX(0.87);transform-origin:100% 50%">1</span></div>
<div style="position:absolute;left:461.50px;top:283.72px;width:36.90px;height:8.63px;display:flex;justify-content:flex-end;align-items:center;text-align:right;padding:0 1.8px;font-size:6.9px;line-height:6.9px;"><span style="display:inline-block;white-space:nowrap;flex-shrink:0;transform:scaleX(0.87);transform-origin:100% 50%">3,000</span></div>
<div style="position:absolute;left:498.40px;top:283.72px;width:40.00px;height:8.63px;display:flex;justify-content:flex-end;align-items:center;text-align:right;padding:0 1.8px;font-size:6.9px;line-height:6.9px;"><span style="display:inline-block;white-space:nowrap;flex-shrink:0;transform:scaleX(0.87);transform-origin:100% 50%">3,000</span></div>
<div style="position:absolute;left:8.70px;top:292.36px;width:26.70px;height:8.63px;display:flex;justify-content:center;align-items:center;text-align:center;padding:0 1.8px;font-size:6.9px;line-height:6.9px;"><span style="display:inline-block;white-space:nowrap;flex-shrink:0;transform:scaleX(0.87);transform-origin:50% 50%">7</span></div>
<div style="position:absolute;left:35.40px;top:292.36px;width:81.70px;height:8.63px;display:flex;justify-content:flex-start;align-items:center;text-align:left;padding:0 1.8px;font-size:6.9px;line-height:6.9px;"><span style="display:inline-block;white-space:nowrap;flex-shrink:0;transform:scaleX(0.87);transform-origin:0 50%">123 Колье (Au 999,9)</span></div>
<div style="position:absolute;left:117.10px;top:292.36px;width:57.10px;height:8.63px;display:flex;justify-content:center;align-items:center;text-align:center;padding:0 1.8px;font-size:6.9px;line-height:6.9px;"><span style="display:inline-block;white-space:nowrap;flex-shrink:0;transform:scaleX(0.87);transform-origin:50% 50%">9000000000100</span></div>
<div style="position:absolute;left:174.20px;top:292.36px;width:46.00px;height:8.63px;display:flex;justify-content:center;align-items:center;text-align:center;padding:0 1.8px;font-size:6.9px;line-height:6.9px;"><span style="display:inline-block;white-space:nowrap;flex-shrink:0;transform:scaleX(0.87);transform-origin:50% 50%">999,9</span></div>
<div style="position:absolute;left:220.20px;top:292.36px;width:36.10px;height:8.63px;display:flex;justify-content:flex-end;align-items:center;text-align:right;padding:0 1.8px;font-size:6.9px;line-height:6.9px;"><span style="display:inline-block;white-space:nowrap;flex-shrink:0;transform:scaleX(0.87);transform-origin:100% 50%">1</span></div>
<div style="position:absolute;left:256.30px;top:292.36px;width:36.10px;height:8.63px;display:flex;justify-content:flex-end;align-items:center;text-align:right;padding:0 1.8px;font-size:6.9px;line-height:6.9px;"><span style="display:inline-block;white-space:nowrap;flex-shrink:0;transform:scaleX(0.87);transform-origin:100% 50%">3,000</span></div>
<div style="position:absolute;left:292.40px;top:292.36px;width:37.00px;height:8.63px;display:flex;justify-content:flex-end;align-items:center;text-align:right;padding:0 1.8px;font-size:6.9px;line-height:6.9px;"><span style="display:inline-block;white-space:nowrap;flex-shrink:0;transform:scaleX(0.87);transform-origin:100% 50%">3,000</span></div>
<div style="position:absolute;left:370.40px;top:292.36px;width:40.50px;height:8.63px;display:flex;justify-content:flex-end;align-items:center;text-align:right;padding:0 1.8px;font-size:6.9px;line-height:6.9px;"><span style="display:inline-block;white-space:nowrap;flex-shrink:0;transform:scaleX(0.87);transform-origin:100% 50%">13 750</span></div>
<div style="position:absolute;left:410.90px;top:292.36px;width:50.60px;height:8.63px;display:flex;justify-content:flex-end;align-items:center;text-align:right;padding:0 1.8px;font-size:6.9px;line-height:6.9px;"><span style="display:inline-block;white-space:nowrap;flex-shrink:0;transform:scaleX(0.87);transform-origin:100% 50%">1</span></div>
<div style="position:absolute;left:461.50px;top:292.36px;width:36.90px;height:8.63px;display:flex;justify-content:flex-end;align-items:center;text-align:right;padding:0 1.8px;font-size:6.9px;line-height:6.9px;"><span style="display:inline-block;white-space:nowrap;flex-shrink:0;transform:scaleX(0.87);transform-origin:100% 50%">3,000</span></div>
<div style="position:absolute;left:498.40px;top:292.36px;width:40.00px;height:8.63px;display:flex;justify-content:flex-end;align-items:center;text-align:right;padding:0 1.8px;font-size:6.9px;line-height:6.9px;"><span style="display:inline-block;white-space:nowrap;flex-shrink:0;transform:scaleX(0.87);transform-origin:100% 50%">3,000</span></div>
<div style="position:absolute;left:8.70px;top:300.99px;width:26.70px;height:8.63px;display:flex;justify-content:center;align-items:center;text-align:center;padding:0 1.8px;font-size:6.9px;line-height:6.9px;"><span style="display:inline-block;white-space:nowrap;flex-shrink:0;transform:scaleX(0.87);transform-origin:50% 50%">8</span></div>
<div style="position:absolute;left:35.40px;top:300.99px;width:81.70px;height:8.63px;display:flex;justify-content:flex-start;align-items:center;text-align:left;padding:0 1.8px;font-size:6.9px;line-height:6.9px;"><span style="display:inline-block;white-space:nowrap;flex-shrink:0;transform:scaleX(0.87);transform-origin:0 50%">123 Колье (Au 999,9)</span></div>
<div style="position:absolute;left:117.10px;top:300.99px;width:57.10px;height:8.63px;display:flex;justify-content:center;align-items:center;text-align:center;padding:0 1.8px;font-size:6.9px;line-height:6.9px;"><span style="display:inline-block;white-space:nowrap;flex-shrink:0;transform:scaleX(0.87);transform-origin:50% 50%">9000000000117</span></div>
<div style="position:absolute;left:174.20px;top:300.99px;width:46.00px;height:8.63px;display:flex;justify-content:center;align-items:center;text-align:center;padding:0 1.8px;font-size:6.9px;line-height:6.9px;"><span style="display:inline-block;white-space:nowrap;flex-shrink:0;transform:scaleX(0.87);transform-origin:50% 50%">999,9</span></div>
<div style="position:absolute;left:220.20px;top:300.99px;width:36.10px;height:8.63px;display:flex;justify-content:flex-end;align-items:center;text-align:right;padding:0 1.8px;font-size:6.9px;line-height:6.9px;"><span style="display:inline-block;white-space:nowrap;flex-shrink:0;transform:scaleX(0.87);transform-origin:100% 50%">1</span></div>
<div style="position:absolute;left:256.30px;top:300.99px;width:36.10px;height:8.63px;display:flex;justify-content:flex-end;align-items:center;text-align:right;padding:0 1.8px;font-size:6.9px;line-height:6.9px;"><span style="display:inline-block;white-space:nowrap;flex-shrink:0;transform:scaleX(0.87);transform-origin:100% 50%">3,000</span></div>
<div style="position:absolute;left:292.40px;top:300.99px;width:37.00px;height:8.63px;display:flex;justify-content:flex-end;align-items:center;text-align:right;padding:0 1.8px;font-size:6.9px;line-height:6.9px;"><span style="display:inline-block;white-space:nowrap;flex-shrink:0;transform:scaleX(0.87);transform-origin:100% 50%">3,000</span></div>
<div style="position:absolute;left:370.40px;top:300.99px;width:40.50px;height:8.63px;display:flex;justify-content:flex-end;align-items:center;text-align:right;padding:0 1.8px;font-size:6.9px;line-height:6.9px;"><span style="display:inline-block;white-space:nowrap;flex-shrink:0;transform:scaleX(0.87);transform-origin:100% 50%">13 750</span></div>
<div style="position:absolute;left:410.90px;top:300.99px;width:50.60px;height:8.63px;display:flex;justify-content:flex-end;align-items:center;text-align:right;padding:0 1.8px;font-size:6.9px;line-height:6.9px;"><span style="display:inline-block;white-space:nowrap;flex-shrink:0;transform:scaleX(0.87);transform-origin:100% 50%">1</span></div>
<div style="position:absolute;left:461.50px;top:300.99px;width:36.90px;height:8.63px;display:flex;justify-content:flex-end;align-items:center;text-align:right;padding:0 1.8px;font-size:6.9px;line-height:6.9px;"><span style="display:inline-block;white-space:nowrap;flex-shrink:0;transform:scaleX(0.87);transform-origin:100% 50%">3,000</span></div>
<div style="position:absolute;left:498.40px;top:300.99px;width:40.00px;height:8.63px;display:flex;justify-content:flex-end;align-items:center;text-align:right;padding:0 1.8px;font-size:6.9px;line-height:6.9px;"><span style="display:inline-block;white-space:nowrap;flex-shrink:0;transform:scaleX(0.87);transform-origin:100% 50%">3,000</span></div>
<div style="position:absolute;left:8.70px;top:309.62px;width:26.70px;height:8.63px;display:flex;justify-content:center;align-items:center;text-align:center;padding:0 1.8px;font-size:6.9px;line-height:6.9px;"><span style="display:inline-block;white-space:nowrap;flex-shrink:0;transform:scaleX(0.87);transform-origin:50% 50%">9</span></div>
<div style="position:absolute;left:35.40px;top:309.62px;width:81.70px;height:8.63px;display:flex;justify-content:flex-start;align-items:center;text-align:left;padding:0 1.8px;font-size:6.9px;line-height:6.9px;"><span style="display:inline-block;white-space:nowrap;flex-shrink:0;transform:scaleX(0.87);transform-origin:0 50%">123 Колье (Au 999,9)</span></div>
<div style="position:absolute;left:117.10px;top:309.62px;width:57.10px;height:8.63px;display:flex;justify-content:center;align-items:center;text-align:center;padding:0 1.8px;font-size:6.9px;line-height:6.9px;"><span style="display:inline-block;white-space:nowrap;flex-shrink:0;transform:scaleX(0.87);transform-origin:50% 50%">9000000000124</span></div>
<div style="position:absolute;left:174.20px;top:309.62px;width:46.00px;height:8.63px;display:flex;justify-content:center;align-items:center;text-align:center;padding:0 1.8px;font-size:6.9px;line-height:6.9px;"><span style="display:inline-block;white-space:nowrap;flex-shrink:0;transform:scaleX(0.87);transform-origin:50% 50%">999,9</span></div>
<div style="position:absolute;left:220.20px;top:309.62px;width:36.10px;height:8.63px;display:flex;justify-content:flex-end;align-items:center;text-align:right;padding:0 1.8px;font-size:6.9px;line-height:6.9px;"><span style="display:inline-block;white-space:nowrap;flex-shrink:0;transform:scaleX(0.87);transform-origin:100% 50%">1</span></div>
<div style="position:absolute;left:256.30px;top:309.62px;width:36.10px;height:8.63px;display:flex;justify-content:flex-end;align-items:center;text-align:right;padding:0 1.8px;font-size:6.9px;line-height:6.9px;"><span style="display:inline-block;white-space:nowrap;flex-shrink:0;transform:scaleX(0.87);transform-origin:100% 50%">3,000</span></div>
<div style="position:absolute;left:292.40px;top:309.62px;width:37.00px;height:8.63px;display:flex;justify-content:flex-end;align-items:center;text-align:right;padding:0 1.8px;font-size:6.9px;line-height:6.9px;"><span style="display:inline-block;white-space:nowrap;flex-shrink:0;transform:scaleX(0.87);transform-origin:100% 50%">3,000</span></div>
<div style="position:absolute;left:370.40px;top:309.62px;width:40.50px;height:8.63px;display:flex;justify-content:flex-end;align-items:center;text-align:right;padding:0 1.8px;font-size:6.9px;line-height:6.9px;"><span style="display:inline-block;white-space:nowrap;flex-shrink:0;transform:scaleX(0.87);transform-origin:100% 50%">13 750</span></div>
<div style="position:absolute;left:410.90px;top:309.62px;width:50.60px;height:8.63px;display:flex;justify-content:flex-end;align-items:center;text-align:right;padding:0 1.8px;font-size:6.9px;line-height:6.9px;"><span style="display:inline-block;white-space:nowrap;flex-shrink:0;transform:scaleX(0.87);transform-origin:100% 50%">1</span></div>
<div style="position:absolute;left:461.50px;top:309.62px;width:36.90px;height:8.63px;display:flex;justify-content:flex-end;align-items:center;text-align:right;padding:0 1.8px;font-size:6.9px;line-height:6.9px;"><span style="display:inline-block;white-space:nowrap;flex-shrink:0;transform:scaleX(0.87);transform-origin:100% 50%">3,000</span></div>
<div style="position:absolute;left:498.40px;top:309.62px;width:40.00px;height:8.63px;display:flex;justify-content:flex-end;align-items:center;text-align:right;padding:0 1.8px;font-size:6.9px;line-height:6.9px;"><span style="display:inline-block;white-space:nowrap;flex-shrink:0;transform:scaleX(0.87);transform-origin:100% 50%">3,000</span></div>
<div style="position:absolute;left:8.70px;top:318.25px;width:26.70px;height:8.63px;display:flex;justify-content:center;align-items:center;text-align:center;padding:0 1.8px;font-size:6.9px;line-height:6.9px;"><span style="display:inline-block;white-space:nowrap;flex-shrink:0;transform:scaleX(0.87);transform-origin:50% 50%">10</span></div>
<div style="position:absolute;left:35.40px;top:318.25px;width:81.70px;height:8.63px;display:flex;justify-content:flex-start;align-items:center;text-align:left;padding:0 1.8px;font-size:6.9px;line-height:6.9px;"><span style="display:inline-block;white-space:nowrap;flex-shrink:0;transform:scaleX(0.87);transform-origin:0 50%">123 Колье (Au 999,9)</span></div>
<div style="position:absolute;left:117.10px;top:318.25px;width:57.10px;height:8.63px;display:flex;justify-content:center;align-items:center;text-align:center;padding:0 1.8px;font-size:6.9px;line-height:6.9px;"><span style="display:inline-block;white-space:nowrap;flex-shrink:0;transform:scaleX(0.87);transform-origin:50% 50%">9000000000131</span></div>
<div style="position:absolute;left:174.20px;top:318.25px;width:46.00px;height:8.63px;display:flex;justify-content:center;align-items:center;text-align:center;padding:0 1.8px;font-size:6.9px;line-height:6.9px;"><span style="display:inline-block;white-space:nowrap;flex-shrink:0;transform:scaleX(0.87);transform-origin:50% 50%">999,9</span></div>
<div style="position:absolute;left:220.20px;top:318.25px;width:36.10px;height:8.63px;display:flex;justify-content:flex-end;align-items:center;text-align:right;padding:0 1.8px;font-size:6.9px;line-height:6.9px;"><span style="display:inline-block;white-space:nowrap;flex-shrink:0;transform:scaleX(0.87);transform-origin:100% 50%">1</span></div>
<div style="position:absolute;left:256.30px;top:318.25px;width:36.10px;height:8.63px;display:flex;justify-content:flex-end;align-items:center;text-align:right;padding:0 1.8px;font-size:6.9px;line-height:6.9px;"><span style="display:inline-block;white-space:nowrap;flex-shrink:0;transform:scaleX(0.87);transform-origin:100% 50%">3,000</span></div>
<div style="position:absolute;left:292.40px;top:318.25px;width:37.00px;height:8.63px;display:flex;justify-content:flex-end;align-items:center;text-align:right;padding:0 1.8px;font-size:6.9px;line-height:6.9px;"><span style="display:inline-block;white-space:nowrap;flex-shrink:0;transform:scaleX(0.87);transform-origin:100% 50%">3,000</span></div>
<div style="position:absolute;left:370.40px;top:318.25px;width:40.50px;height:8.63px;display:flex;justify-content:flex-end;align-items:center;text-align:right;padding:0 1.8px;font-size:6.9px;line-height:6.9px;"><span style="display:inline-block;white-space:nowrap;flex-shrink:0;transform:scaleX(0.87);transform-origin:100% 50%">13 750</span></div>
<div style="position:absolute;left:410.90px;top:318.25px;width:50.60px;height:8.63px;display:flex;justify-content:flex-end;align-items:center;text-align:right;padding:0 1.8px;font-size:6.9px;line-height:6.9px;"><span style="display:inline-block;white-space:nowrap;flex-shrink:0;transform:scaleX(0.87);transform-origin:100% 50%">1</span></div>
<div style="position:absolute;left:461.50px;top:318.25px;width:36.90px;height:8.63px;display:flex;justify-content:flex-end;align-items:center;text-align:right;padding:0 1.8px;font-size:6.9px;line-height:6.9px;"><span style="display:inline-block;white-space:nowrap;flex-shrink:0;transform:scaleX(0.87);transform-origin:100% 50%">3,000</span></div>
<div style="position:absolute;left:498.40px;top:318.25px;width:40.00px;height:8.63px;display:flex;justify-content:flex-end;align-items:center;text-align:right;padding:0 1.8px;font-size:6.9px;line-height:6.9px;"><span style="display:inline-block;white-space:nowrap;flex-shrink:0;transform:scaleX(0.87);transform-origin:100% 50%">3,000</span></div>
<div style="position:absolute;left:8.70px;top:326.88px;width:26.70px;height:8.63px;display:flex;justify-content:center;align-items:center;text-align:center;padding:0 1.8px;font-size:6.9px;line-height:6.9px;"><span style="display:inline-block;white-space:nowrap;flex-shrink:0;transform:scaleX(0.87);transform-origin:50% 50%">11</span></div>
<div style="position:absolute;left:35.40px;top:326.88px;width:81.70px;height:8.63px;display:flex;justify-content:flex-start;align-items:center;text-align:left;padding:0 1.8px;font-size:6.9px;line-height:6.9px;"><span style="display:inline-block;white-space:nowrap;flex-shrink:0;transform:scaleX(0.87);transform-origin:0 50%">123 Колье (Au 999,9)</span></div>
<div style="position:absolute;left:117.10px;top:326.88px;width:57.10px;height:8.63px;display:flex;justify-content:center;align-items:center;text-align:center;padding:0 1.8px;font-size:6.9px;line-height:6.9px;"><span style="display:inline-block;white-space:nowrap;flex-shrink:0;transform:scaleX(0.87);transform-origin:50% 50%">9000000000148</span></div>
<div style="position:absolute;left:174.20px;top:326.88px;width:46.00px;height:8.63px;display:flex;justify-content:center;align-items:center;text-align:center;padding:0 1.8px;font-size:6.9px;line-height:6.9px;"><span style="display:inline-block;white-space:nowrap;flex-shrink:0;transform:scaleX(0.87);transform-origin:50% 50%">999,9</span></div>
<div style="position:absolute;left:220.20px;top:326.88px;width:36.10px;height:8.63px;display:flex;justify-content:flex-end;align-items:center;text-align:right;padding:0 1.8px;font-size:6.9px;line-height:6.9px;"><span style="display:inline-block;white-space:nowrap;flex-shrink:0;transform:scaleX(0.87);transform-origin:100% 50%">1</span></div>
<div style="position:absolute;left:256.30px;top:326.88px;width:36.10px;height:8.63px;display:flex;justify-content:flex-end;align-items:center;text-align:right;padding:0 1.8px;font-size:6.9px;line-height:6.9px;"><span style="display:inline-block;white-space:nowrap;flex-shrink:0;transform:scaleX(0.87);transform-origin:100% 50%">3,000</span></div>
<div style="position:absolute;left:292.40px;top:326.88px;width:37.00px;height:8.63px;display:flex;justify-content:flex-end;align-items:center;text-align:right;padding:0 1.8px;font-size:6.9px;line-height:6.9px;"><span style="display:inline-block;white-space:nowrap;flex-shrink:0;transform:scaleX(0.87);transform-origin:100% 50%">3,000</span></div>
<div style="position:absolute;left:370.40px;top:326.88px;width:40.50px;height:8.63px;display:flex;justify-content:flex-end;align-items:center;text-align:right;padding:0 1.8px;font-size:6.9px;line-height:6.9px;"><span style="display:inline-block;white-space:nowrap;flex-shrink:0;transform:scaleX(0.87);transform-origin:100% 50%">13 750</span></div>
<div style="position:absolute;left:410.90px;top:326.88px;width:50.60px;height:8.63px;display:flex;justify-content:flex-end;align-items:center;text-align:right;padding:0 1.8px;font-size:6.9px;line-height:6.9px;"><span style="display:inline-block;white-space:nowrap;flex-shrink:0;transform:scaleX(0.87);transform-origin:100% 50%">1</span></div>
<div style="position:absolute;left:461.50px;top:326.88px;width:36.90px;height:8.63px;display:flex;justify-content:flex-end;align-items:center;text-align:right;padding:0 1.8px;font-size:6.9px;line-height:6.9px;"><span style="display:inline-block;white-space:nowrap;flex-shrink:0;transform:scaleX(0.87);transform-origin:100% 50%">3,000</span></div>
<div style="position:absolute;left:498.40px;top:326.88px;width:40.00px;height:8.63px;display:flex;justify-content:flex-end;align-items:center;text-align:right;padding:0 1.8px;font-size:6.9px;line-height:6.9px;"><span style="display:inline-block;white-space:nowrap;flex-shrink:0;transform:scaleX(0.87);transform-origin:100% 50%">3,000</span></div>
<div style="position:absolute;left:8.70px;top:335.51px;width:26.70px;height:8.63px;display:flex;justify-content:center;align-items:center;text-align:center;padding:0 1.8px;font-size:6.9px;line-height:6.9px;"><span style="display:inline-block;white-space:nowrap;flex-shrink:0;transform:scaleX(0.87);transform-origin:50% 50%">12</span></div>
<div style="position:absolute;left:35.40px;top:335.51px;width:81.70px;height:8.63px;display:flex;justify-content:flex-start;align-items:center;text-align:left;padding:0 1.8px;font-size:6.9px;line-height:6.9px;"><span style="display:inline-block;white-space:nowrap;flex-shrink:0;transform:scaleX(0.87);transform-origin:0 50%">123 Колье (Au 999,9)</span></div>
<div style="position:absolute;left:117.10px;top:335.51px;width:57.10px;height:8.63px;display:flex;justify-content:center;align-items:center;text-align:center;padding:0 1.8px;font-size:6.9px;line-height:6.9px;"><span style="display:inline-block;white-space:nowrap;flex-shrink:0;transform:scaleX(0.87);transform-origin:50% 50%">9000000000155</span></div>
<div style="position:absolute;left:174.20px;top:335.51px;width:46.00px;height:8.63px;display:flex;justify-content:center;align-items:center;text-align:center;padding:0 1.8px;font-size:6.9px;line-height:6.9px;"><span style="display:inline-block;white-space:nowrap;flex-shrink:0;transform:scaleX(0.87);transform-origin:50% 50%">999,9</span></div>
<div style="position:absolute;left:220.20px;top:335.51px;width:36.10px;height:8.63px;display:flex;justify-content:flex-end;align-items:center;text-align:right;padding:0 1.8px;font-size:6.9px;line-height:6.9px;"><span style="display:inline-block;white-space:nowrap;flex-shrink:0;transform:scaleX(0.87);transform-origin:100% 50%">1</span></div>
<div style="position:absolute;left:256.30px;top:335.51px;width:36.10px;height:8.63px;display:flex;justify-content:flex-end;align-items:center;text-align:right;padding:0 1.8px;font-size:6.9px;line-height:6.9px;"><span style="display:inline-block;white-space:nowrap;flex-shrink:0;transform:scaleX(0.87);transform-origin:100% 50%">3,000</span></div>
<div style="position:absolute;left:292.40px;top:335.51px;width:37.00px;height:8.63px;display:flex;justify-content:flex-end;align-items:center;text-align:right;padding:0 1.8px;font-size:6.9px;line-height:6.9px;"><span style="display:inline-block;white-space:nowrap;flex-shrink:0;transform:scaleX(0.87);transform-origin:100% 50%">3,000</span></div>
<div style="position:absolute;left:370.40px;top:335.51px;width:40.50px;height:8.63px;display:flex;justify-content:flex-end;align-items:center;text-align:right;padding:0 1.8px;font-size:6.9px;line-height:6.9px;"><span style="display:inline-block;white-space:nowrap;flex-shrink:0;transform:scaleX(0.87);transform-origin:100% 50%">13 750</span></div>
<div style="position:absolute;left:410.90px;top:335.51px;width:50.60px;height:8.63px;display:flex;justify-content:flex-end;align-items:center;text-align:right;padding:0 1.8px;font-size:6.9px;line-height:6.9px;"><span style="display:inline-block;white-space:nowrap;flex-shrink:0;transform:scaleX(0.87);transform-origin:100% 50%">1</span></div>
<div style="position:absolute;left:461.50px;top:335.51px;width:36.90px;height:8.63px;display:flex;justify-content:flex-end;align-items:center;text-align:right;padding:0 1.8px;font-size:6.9px;line-height:6.9px;"><span style="display:inline-block;white-space:nowrap;flex-shrink:0;transform:scaleX(0.87);transform-origin:100% 50%">3,000</span></div>
<div style="position:absolute;left:498.40px;top:335.51px;width:40.00px;height:8.63px;display:flex;justify-content:flex-end;align-items:center;text-align:right;padding:0 1.8px;font-size:6.9px;line-height:6.9px;"><span style="display:inline-block;white-space:nowrap;flex-shrink:0;transform:scaleX(0.87);transform-origin:100% 50%">3,000</span></div>
<div style="position:absolute;left:8.70px;top:344.14px;width:26.70px;height:8.63px;display:flex;justify-content:center;align-items:center;text-align:center;padding:0 1.8px;font-size:6.9px;line-height:6.9px;"><span style="display:inline-block;white-space:nowrap;flex-shrink:0;transform:scaleX(0.87);transform-origin:50% 50%">13</span></div>
<div style="position:absolute;left:35.40px;top:344.14px;width:81.70px;height:8.63px;display:flex;justify-content:flex-start;align-items:center;text-align:left;padding:0 1.8px;font-size:6.9px;line-height:6.9px;"><span style="display:inline-block;white-space:nowrap;flex-shrink:0;transform:scaleX(0.87);transform-origin:0 50%">123 Колье (Au 999,9)</span></div>
<div style="position:absolute;left:117.10px;top:344.14px;width:57.10px;height:8.63px;display:flex;justify-content:center;align-items:center;text-align:center;padding:0 1.8px;font-size:6.9px;line-height:6.9px;"><span style="display:inline-block;white-space:nowrap;flex-shrink:0;transform:scaleX(0.87);transform-origin:50% 50%">9000000000162</span></div>
<div style="position:absolute;left:174.20px;top:344.14px;width:46.00px;height:8.63px;display:flex;justify-content:center;align-items:center;text-align:center;padding:0 1.8px;font-size:6.9px;line-height:6.9px;"><span style="display:inline-block;white-space:nowrap;flex-shrink:0;transform:scaleX(0.87);transform-origin:50% 50%">999,9</span></div>
<div style="position:absolute;left:220.20px;top:344.14px;width:36.10px;height:8.63px;display:flex;justify-content:flex-end;align-items:center;text-align:right;padding:0 1.8px;font-size:6.9px;line-height:6.9px;"><span style="display:inline-block;white-space:nowrap;flex-shrink:0;transform:scaleX(0.87);transform-origin:100% 50%">1</span></div>
<div style="position:absolute;left:256.30px;top:344.14px;width:36.10px;height:8.63px;display:flex;justify-content:flex-end;align-items:center;text-align:right;padding:0 1.8px;font-size:6.9px;line-height:6.9px;"><span style="display:inline-block;white-space:nowrap;flex-shrink:0;transform:scaleX(0.87);transform-origin:100% 50%">3,000</span></div>
<div style="position:absolute;left:292.40px;top:344.14px;width:37.00px;height:8.63px;display:flex;justify-content:flex-end;align-items:center;text-align:right;padding:0 1.8px;font-size:6.9px;line-height:6.9px;"><span style="display:inline-block;white-space:nowrap;flex-shrink:0;transform:scaleX(0.87);transform-origin:100% 50%">3,000</span></div>
<div style="position:absolute;left:370.40px;top:344.14px;width:40.50px;height:8.63px;display:flex;justify-content:flex-end;align-items:center;text-align:right;padding:0 1.8px;font-size:6.9px;line-height:6.9px;"><span style="display:inline-block;white-space:nowrap;flex-shrink:0;transform:scaleX(0.87);transform-origin:100% 50%">13 750</span></div>
<div style="position:absolute;left:410.90px;top:344.14px;width:50.60px;height:8.63px;display:flex;justify-content:flex-end;align-items:center;text-align:right;padding:0 1.8px;font-size:6.9px;line-height:6.9px;"><span style="display:inline-block;white-space:nowrap;flex-shrink:0;transform:scaleX(0.87);transform-origin:100% 50%">1</span></div>
<div style="position:absolute;left:461.50px;top:344.14px;width:36.90px;height:8.63px;display:flex;justify-content:flex-end;align-items:center;text-align:right;padding:0 1.8px;font-size:6.9px;line-height:6.9px;"><span style="display:inline-block;white-space:nowrap;flex-shrink:0;transform:scaleX(0.87);transform-origin:100% 50%">3,000</span></div>
<div style="position:absolute;left:498.40px;top:344.14px;width:40.00px;height:8.63px;display:flex;justify-content:flex-end;align-items:center;text-align:right;padding:0 1.8px;font-size:6.9px;line-height:6.9px;"><span style="display:inline-block;white-space:nowrap;flex-shrink:0;transform:scaleX(0.87);transform-origin:100% 50%">3,000</span></div>
<div style="position:absolute;left:8.70px;top:352.77px;width:26.70px;height:8.63px;display:flex;justify-content:center;align-items:center;text-align:center;padding:0 1.8px;font-size:6.9px;line-height:6.9px;"><span style="display:inline-block;white-space:nowrap;flex-shrink:0;transform:scaleX(0.87);transform-origin:50% 50%">14</span></div>
<div style="position:absolute;left:35.40px;top:352.77px;width:81.70px;height:8.63px;display:flex;justify-content:flex-start;align-items:center;text-align:left;padding:0 1.8px;font-size:6.9px;line-height:6.9px;"><span style="display:inline-block;white-space:nowrap;flex-shrink:0;transform:scaleX(0.87);transform-origin:0 50%">123 Колье (Au 999,9)</span></div>
<div style="position:absolute;left:117.10px;top:352.77px;width:57.10px;height:8.63px;display:flex;justify-content:center;align-items:center;text-align:center;padding:0 1.8px;font-size:6.9px;line-height:6.9px;"><span style="display:inline-block;white-space:nowrap;flex-shrink:0;transform:scaleX(0.87);transform-origin:50% 50%">9000000000179</span></div>
<div style="position:absolute;left:174.20px;top:352.77px;width:46.00px;height:8.63px;display:flex;justify-content:center;align-items:center;text-align:center;padding:0 1.8px;font-size:6.9px;line-height:6.9px;"><span style="display:inline-block;white-space:nowrap;flex-shrink:0;transform:scaleX(0.87);transform-origin:50% 50%">999,9</span></div>
<div style="position:absolute;left:220.20px;top:352.77px;width:36.10px;height:8.63px;display:flex;justify-content:flex-end;align-items:center;text-align:right;padding:0 1.8px;font-size:6.9px;line-height:6.9px;"><span style="display:inline-block;white-space:nowrap;flex-shrink:0;transform:scaleX(0.87);transform-origin:100% 50%">1</span></div>
<div style="position:absolute;left:256.30px;top:352.77px;width:36.10px;height:8.63px;display:flex;justify-content:flex-end;align-items:center;text-align:right;padding:0 1.8px;font-size:6.9px;line-height:6.9px;"><span style="display:inline-block;white-space:nowrap;flex-shrink:0;transform:scaleX(0.87);transform-origin:100% 50%">3,000</span></div>
<div style="position:absolute;left:292.40px;top:352.77px;width:37.00px;height:8.63px;display:flex;justify-content:flex-end;align-items:center;text-align:right;padding:0 1.8px;font-size:6.9px;line-height:6.9px;"><span style="display:inline-block;white-space:nowrap;flex-shrink:0;transform:scaleX(0.87);transform-origin:100% 50%">3,000</span></div>
<div style="position:absolute;left:370.40px;top:352.77px;width:40.50px;height:8.63px;display:flex;justify-content:flex-end;align-items:center;text-align:right;padding:0 1.8px;font-size:6.9px;line-height:6.9px;"><span style="display:inline-block;white-space:nowrap;flex-shrink:0;transform:scaleX(0.87);transform-origin:100% 50%">13 750</span></div>
<div style="position:absolute;left:410.90px;top:352.77px;width:50.60px;height:8.63px;display:flex;justify-content:flex-end;align-items:center;text-align:right;padding:0 1.8px;font-size:6.9px;line-height:6.9px;"><span style="display:inline-block;white-space:nowrap;flex-shrink:0;transform:scaleX(0.87);transform-origin:100% 50%">1</span></div>
<div style="position:absolute;left:461.50px;top:352.77px;width:36.90px;height:8.63px;display:flex;justify-content:flex-end;align-items:center;text-align:right;padding:0 1.8px;font-size:6.9px;line-height:6.9px;"><span style="display:inline-block;white-space:nowrap;flex-shrink:0;transform:scaleX(0.87);transform-origin:100% 50%">3,000</span></div>
<div style="position:absolute;left:498.40px;top:352.77px;width:40.00px;height:8.63px;display:flex;justify-content:flex-end;align-items:center;text-align:right;padding:0 1.8px;font-size:6.9px;line-height:6.9px;"><span style="display:inline-block;white-space:nowrap;flex-shrink:0;transform:scaleX(0.87);transform-origin:100% 50%">3,000</span></div>
<div style="position:absolute;left:8.70px;top:361.40px;width:26.70px;height:8.63px;display:flex;justify-content:center;align-items:center;text-align:center;padding:0 1.8px;font-size:6.9px;line-height:6.9px;"><span style="display:inline-block;white-space:nowrap;flex-shrink:0;transform:scaleX(0.87);transform-origin:50% 50%">15</span></div>
<div style="position:absolute;left:35.40px;top:361.40px;width:81.70px;height:8.63px;display:flex;justify-content:flex-start;align-items:center;text-align:left;padding:0 1.8px;font-size:6.9px;line-height:6.9px;"><span style="display:inline-block;white-space:nowrap;flex-shrink:0;transform:scaleX(0.87);transform-origin:0 50%">123 Колье (Au 999,9)</span></div>
<div style="position:absolute;left:117.10px;top:361.40px;width:57.10px;height:8.63px;display:flex;justify-content:center;align-items:center;text-align:center;padding:0 1.8px;font-size:6.9px;line-height:6.9px;"><span style="display:inline-block;white-space:nowrap;flex-shrink:0;transform:scaleX(0.87);transform-origin:50% 50%">9000000000186</span></div>
<div style="position:absolute;left:174.20px;top:361.40px;width:46.00px;height:8.63px;display:flex;justify-content:center;align-items:center;text-align:center;padding:0 1.8px;font-size:6.9px;line-height:6.9px;"><span style="display:inline-block;white-space:nowrap;flex-shrink:0;transform:scaleX(0.87);transform-origin:50% 50%">999,9</span></div>
<div style="position:absolute;left:220.20px;top:361.40px;width:36.10px;height:8.63px;display:flex;justify-content:flex-end;align-items:center;text-align:right;padding:0 1.8px;font-size:6.9px;line-height:6.9px;"><span style="display:inline-block;white-space:nowrap;flex-shrink:0;transform:scaleX(0.87);transform-origin:100% 50%">1</span></div>
<div style="position:absolute;left:256.30px;top:361.40px;width:36.10px;height:8.63px;display:flex;justify-content:flex-end;align-items:center;text-align:right;padding:0 1.8px;font-size:6.9px;line-height:6.9px;"><span style="display:inline-block;white-space:nowrap;flex-shrink:0;transform:scaleX(0.87);transform-origin:100% 50%">3,000</span></div>
<div style="position:absolute;left:292.40px;top:361.40px;width:37.00px;height:8.63px;display:flex;justify-content:flex-end;align-items:center;text-align:right;padding:0 1.8px;font-size:6.9px;line-height:6.9px;"><span style="display:inline-block;white-space:nowrap;flex-shrink:0;transform:scaleX(0.87);transform-origin:100% 50%">3,000</span></div>
<div style="position:absolute;left:370.40px;top:361.40px;width:40.50px;height:8.63px;display:flex;justify-content:flex-end;align-items:center;text-align:right;padding:0 1.8px;font-size:6.9px;line-height:6.9px;"><span style="display:inline-block;white-space:nowrap;flex-shrink:0;transform:scaleX(0.87);transform-origin:100% 50%">13 750</span></div>
<div style="position:absolute;left:410.90px;top:361.40px;width:50.60px;height:8.63px;display:flex;justify-content:flex-end;align-items:center;text-align:right;padding:0 1.8px;font-size:6.9px;line-height:6.9px;"><span style="display:inline-block;white-space:nowrap;flex-shrink:0;transform:scaleX(0.87);transform-origin:100% 50%">1</span></div>
<div style="position:absolute;left:461.50px;top:361.40px;width:36.90px;height:8.63px;display:flex;justify-content:flex-end;align-items:center;text-align:right;padding:0 1.8px;font-size:6.9px;line-height:6.9px;"><span style="display:inline-block;white-space:nowrap;flex-shrink:0;transform:scaleX(0.87);transform-origin:100% 50%">3,000</span></div>
<div style="position:absolute;left:498.40px;top:361.40px;width:40.00px;height:8.63px;display:flex;justify-content:flex-end;align-items:center;text-align:right;padding:0 1.8px;font-size:6.9px;line-height:6.9px;"><span style="display:inline-block;white-space:nowrap;flex-shrink:0;transform:scaleX(0.87);transform-origin:100% 50%">3,000</span></div>
<div style="position:absolute;left:8.70px;top:370.03px;width:26.70px;height:8.63px;display:flex;justify-content:center;align-items:center;text-align:center;padding:0 1.8px;font-size:6.9px;line-height:6.9px;"><span style="display:inline-block;white-space:nowrap;flex-shrink:0;transform:scaleX(0.87);transform-origin:50% 50%">16</span></div>
<div style="position:absolute;left:35.40px;top:370.03px;width:81.70px;height:8.63px;display:flex;justify-content:flex-start;align-items:center;text-align:left;padding:0 1.8px;font-size:6.9px;line-height:6.9px;"><span style="display:inline-block;white-space:nowrap;flex-shrink:0;transform:scaleX(0.87);transform-origin:0 50%">123 Колье (Au 999,9)</span></div>
<div style="position:absolute;left:117.10px;top:370.03px;width:57.10px;height:8.63px;display:flex;justify-content:center;align-items:center;text-align:center;padding:0 1.8px;font-size:6.9px;line-height:6.9px;"><span style="display:inline-block;white-space:nowrap;flex-shrink:0;transform:scaleX(0.87);transform-origin:50% 50%">9000000000193</span></div>
<div style="position:absolute;left:174.20px;top:370.03px;width:46.00px;height:8.63px;display:flex;justify-content:center;align-items:center;text-align:center;padding:0 1.8px;font-size:6.9px;line-height:6.9px;"><span style="display:inline-block;white-space:nowrap;flex-shrink:0;transform:scaleX(0.87);transform-origin:50% 50%">999,9</span></div>
<div style="position:absolute;left:220.20px;top:370.03px;width:36.10px;height:8.63px;display:flex;justify-content:flex-end;align-items:center;text-align:right;padding:0 1.8px;font-size:6.9px;line-height:6.9px;"><span style="display:inline-block;white-space:nowrap;flex-shrink:0;transform:scaleX(0.87);transform-origin:100% 50%">1</span></div>
<div style="position:absolute;left:256.30px;top:370.03px;width:36.10px;height:8.63px;display:flex;justify-content:flex-end;align-items:center;text-align:right;padding:0 1.8px;font-size:6.9px;line-height:6.9px;"><span style="display:inline-block;white-space:nowrap;flex-shrink:0;transform:scaleX(0.87);transform-origin:100% 50%">3,000</span></div>
<div style="position:absolute;left:292.40px;top:370.03px;width:37.00px;height:8.63px;display:flex;justify-content:flex-end;align-items:center;text-align:right;padding:0 1.8px;font-size:6.9px;line-height:6.9px;"><span style="display:inline-block;white-space:nowrap;flex-shrink:0;transform:scaleX(0.87);transform-origin:100% 50%">3,000</span></div>
<div style="position:absolute;left:370.40px;top:370.03px;width:40.50px;height:8.63px;display:flex;justify-content:flex-end;align-items:center;text-align:right;padding:0 1.8px;font-size:6.9px;line-height:6.9px;"><span style="display:inline-block;white-space:nowrap;flex-shrink:0;transform:scaleX(0.87);transform-origin:100% 50%">13 750</span></div>
<div style="position:absolute;left:410.90px;top:370.03px;width:50.60px;height:8.63px;display:flex;justify-content:flex-end;align-items:center;text-align:right;padding:0 1.8px;font-size:6.9px;line-height:6.9px;"><span style="display:inline-block;white-space:nowrap;flex-shrink:0;transform:scaleX(0.87);transform-origin:100% 50%">1</span></div>
<div style="position:absolute;left:461.50px;top:370.03px;width:36.90px;height:8.63px;display:flex;justify-content:flex-end;align-items:center;text-align:right;padding:0 1.8px;font-size:6.9px;line-height:6.9px;"><span style="display:inline-block;white-space:nowrap;flex-shrink:0;transform:scaleX(0.87);transform-origin:100% 50%">3,000</span></div>
<div style="position:absolute;left:498.40px;top:370.03px;width:40.00px;height:8.63px;display:flex;justify-content:flex-end;align-items:center;text-align:right;padding:0 1.8px;font-size:6.9px;line-height:6.9px;"><span style="display:inline-block;white-space:nowrap;flex-shrink:0;transform:scaleX(0.87);transform-origin:100% 50%">3,000</span></div>
<div style="position:absolute;left:8.70px;top:378.67px;width:26.70px;height:8.63px;display:flex;justify-content:center;align-items:center;text-align:center;padding:0 1.8px;font-size:6.9px;line-height:6.9px;"><span style="display:inline-block;white-space:nowrap;flex-shrink:0;transform:scaleX(0.87);transform-origin:50% 50%">17</span></div>
<div style="position:absolute;left:35.40px;top:378.67px;width:81.70px;height:8.63px;display:flex;justify-content:flex-start;align-items:center;text-align:left;padding:0 1.8px;font-size:6.9px;line-height:6.9px;"><span style="display:inline-block;white-space:nowrap;flex-shrink:0;transform:scaleX(0.87);transform-origin:0 50%">123 Колье (Au 999,9)</span></div>
<div style="position:absolute;left:117.10px;top:378.67px;width:57.10px;height:8.63px;display:flex;justify-content:center;align-items:center;text-align:center;padding:0 1.8px;font-size:6.9px;line-height:6.9px;"><span style="display:inline-block;white-space:nowrap;flex-shrink:0;transform:scaleX(0.87);transform-origin:50% 50%">9000000000209</span></div>
<div style="position:absolute;left:174.20px;top:378.67px;width:46.00px;height:8.63px;display:flex;justify-content:center;align-items:center;text-align:center;padding:0 1.8px;font-size:6.9px;line-height:6.9px;"><span style="display:inline-block;white-space:nowrap;flex-shrink:0;transform:scaleX(0.87);transform-origin:50% 50%">999,9</span></div>
<div style="position:absolute;left:220.20px;top:378.67px;width:36.10px;height:8.63px;display:flex;justify-content:flex-end;align-items:center;text-align:right;padding:0 1.8px;font-size:6.9px;line-height:6.9px;"><span style="display:inline-block;white-space:nowrap;flex-shrink:0;transform:scaleX(0.87);transform-origin:100% 50%">1</span></div>
<div style="position:absolute;left:256.30px;top:378.67px;width:36.10px;height:8.63px;display:flex;justify-content:flex-end;align-items:center;text-align:right;padding:0 1.8px;font-size:6.9px;line-height:6.9px;"><span style="display:inline-block;white-space:nowrap;flex-shrink:0;transform:scaleX(0.87);transform-origin:100% 50%">3,000</span></div>
<div style="position:absolute;left:292.40px;top:378.67px;width:37.00px;height:8.63px;display:flex;justify-content:flex-end;align-items:center;text-align:right;padding:0 1.8px;font-size:6.9px;line-height:6.9px;"><span style="display:inline-block;white-space:nowrap;flex-shrink:0;transform:scaleX(0.87);transform-origin:100% 50%">3,000</span></div>
<div style="position:absolute;left:370.40px;top:378.67px;width:40.50px;height:8.63px;display:flex;justify-content:flex-end;align-items:center;text-align:right;padding:0 1.8px;font-size:6.9px;line-height:6.9px;"><span style="display:inline-block;white-space:nowrap;flex-shrink:0;transform:scaleX(0.87);transform-origin:100% 50%">13 750</span></div>
<div style="position:absolute;left:410.90px;top:378.67px;width:50.60px;height:8.63px;display:flex;justify-content:flex-end;align-items:center;text-align:right;padding:0 1.8px;font-size:6.9px;line-height:6.9px;"><span style="display:inline-block;white-space:nowrap;flex-shrink:0;transform:scaleX(0.87);transform-origin:100% 50%">1</span></div>
<div style="position:absolute;left:461.50px;top:378.67px;width:36.90px;height:8.63px;display:flex;justify-content:flex-end;align-items:center;text-align:right;padding:0 1.8px;font-size:6.9px;line-height:6.9px;"><span style="display:inline-block;white-space:nowrap;flex-shrink:0;transform:scaleX(0.87);transform-origin:100% 50%">3,000</span></div>
<div style="position:absolute;left:498.40px;top:378.67px;width:40.00px;height:8.63px;display:flex;justify-content:flex-end;align-items:center;text-align:right;padding:0 1.8px;font-size:6.9px;line-height:6.9px;"><span style="display:inline-block;white-space:nowrap;flex-shrink:0;transform:scaleX(0.87);transform-origin:100% 50%">3,000</span></div>
<div style="position:absolute;left:154.20px;top:387.30px;width:66.00px;height:8.70px;display:flex;justify-content:flex-end;align-items:center;text-align:right;padding:0 11px;font-size:6.9px;line-height:6.9px;"><span style="display:inline-block;white-space:nowrap;flex-shrink:0;transform:scaleX(0.98);transform-origin:100% 50%">Итого:</span></div>
<div style="position:absolute;left:220.20px;top:387.30px;width:36.10px;height:8.70px;display:flex;justify-content:flex-end;align-items:center;text-align:right;padding:0 1.8px;font-size:6.9px;line-height:6.9px;"><span style="display:inline-block;white-space:nowrap;flex-shrink:0;transform:scaleX(0.87);transform-origin:100% 50%">17</span></div>
<div style="position:absolute;left:256.30px;top:387.30px;width:36.10px;height:8.70px;display:flex;justify-content:flex-end;align-items:center;text-align:right;padding:0 1.8px;font-size:6.9px;line-height:6.9px;"><span style="display:inline-block;white-space:nowrap;flex-shrink:0;transform:scaleX(0.87);transform-origin:100% 50%">51,560</span></div>
<div style="position:absolute;left:292.40px;top:387.30px;width:37.00px;height:8.70px;display:flex;justify-content:flex-end;align-items:center;text-align:right;padding:0 1.8px;font-size:6.9px;line-height:6.9px;"><span style="display:inline-block;white-space:nowrap;flex-shrink:0;transform:scaleX(0.87);transform-origin:100% 50%">50,083</span></div>
<div style="position:absolute;left:370.40px;top:387.30px;width:40.50px;height:8.70px;display:flex;justify-content:flex-end;align-items:center;text-align:right;padding:0 1.8px;font-size:6.9px;line-height:6.9px;font-weight:bold;"><span style="display:inline-block;white-space:nowrap;flex-shrink:0;transform:scaleX(0.87);transform-origin:100% 50%">221 602,75</span></div>
<div style="position:absolute;left:410.90px;top:387.30px;width:50.60px;height:8.70px;display:flex;justify-content:flex-end;align-items:center;text-align:right;padding:0 1.8px;font-size:6.9px;line-height:6.9px;"><span style="display:inline-block;white-space:nowrap;flex-shrink:0;transform:scaleX(0.87);transform-origin:100% 50%">17</span></div>
<div style="position:absolute;left:461.50px;top:387.30px;width:36.90px;height:8.70px;display:flex;justify-content:flex-end;align-items:center;text-align:right;padding:0 1.8px;font-size:6.9px;line-height:6.9px;"><span style="display:inline-block;white-space:nowrap;flex-shrink:0;transform:scaleX(0.87);transform-origin:100% 50%">51,560</span></div>
<div style="position:absolute;left:498.40px;top:387.30px;width:40.00px;height:8.70px;display:flex;justify-content:flex-end;align-items:center;text-align:right;padding:0 1.8px;font-size:6.9px;line-height:6.9px;"><span style="display:inline-block;white-space:nowrap;flex-shrink:0;transform:scaleX(0.87);transform-origin:100% 50%">50,083</span></div>
<svg style="position:absolute;left:0;top:0" width="700" height="403" viewBox="0 0 700 403" shape-rendering="geometricPrecision"><rect x="8.7" y="41.4" width="681.7" height="355.2" rx="2" fill="none" stroke="#cdcdcd" stroke-width="1"/><path d="M685.4 46.4 L686.9 44.6 L688.4 46.4Z" fill="#555"/><path d="M685.4 389.9 L686.9 391.7 L688.4 389.9Z" fill="#555"/><line x1="423.95" y1="69.60" x2="487.55" y2="69.60" stroke="#555" stroke-width="0.9"/><line x1="9" y1="111.4" x2="685" y2="111.4" stroke="#858585" stroke-width="1" stroke-dasharray="2.2 1.2"/><line x1="410.10" y1="128.50" x2="539.20" y2="128.50" stroke="#a6a6a6" stroke-width="1.6"/><line x1="410.10" y1="137.30" x2="539.20" y2="137.30" stroke="#a6a6a6" stroke-width="1.6"/><line x1="328.60" y1="146.00" x2="539.20" y2="146.00" stroke="#a6a6a6" stroke-width="1.6"/><line x1="328.60" y1="154.50" x2="539.20" y2="154.50" stroke="#a6a6a6" stroke-width="1.6"/><line x1="328.60" y1="163.00" x2="539.20" y2="163.00" stroke="#a6a6a6" stroke-width="1.6"/><line x1="410.90" y1="127.83" x2="410.90" y2="163.68" stroke="#8e8e8e" stroke-width="1.35"/><line x1="538.40" y1="127.83" x2="538.40" y2="163.68" stroke="#8e8e8e" stroke-width="1.35"/><line x1="461.30" y1="136.62" x2="461.30" y2="163.68" stroke="#8e8e8e" stroke-width="1.35"/><line x1="329.40" y1="145.32" x2="329.40" y2="163.68" stroke="#8e8e8e" stroke-width="1.35"/><line x1="7.90" y1="171.90" x2="539.20" y2="171.90" stroke="#a6a6a6" stroke-width="1.6"/><line x1="34.60" y1="194.20" x2="175.00" y2="194.20" stroke="#a6a6a6" stroke-width="1.6"/><line x1="219.40" y1="194.20" x2="330.20" y2="194.20" stroke="#a6a6a6" stroke-width="1.6"/><line x1="410.10" y1="194.20" x2="539.20" y2="194.20" stroke="#a6a6a6" stroke-width="1.6"/><line x1="255.50" y1="206.40" x2="330.20" y2="206.40" stroke="#a6a6a6" stroke-width="1.6"/><line x1="460.70" y1="206.40" x2="539.20" y2="206.40" stroke="#a6a6a6" stroke-width="1.6"/><line x1="7.90" y1="217.80" x2="539.20" y2="217.80" stroke="#a6a6a6" stroke-width="1.6"/><line x1="7.90" y1="226.40" x2="539.20" y2="226.40" stroke="#a6a6a6" stroke-width="1.6"/><line x1="7.90" y1="248.40" x2="539.20" y2="248.40" stroke="#a6a6a6" stroke-width="1.6"/><line x1="7.90" y1="257.03" x2="539.20" y2="257.03" stroke="#a6a6a6" stroke-width="1.6"/><line x1="7.90" y1="265.66" x2="539.20" y2="265.66" stroke="#a6a6a6" stroke-width="1.6"/><line x1="7.90" y1="274.29" x2="539.20" y2="274.29" stroke="#a6a6a6" stroke-width="1.6"/><line x1="7.90" y1="282.92" x2="539.20" y2="282.92" stroke="#a6a6a6" stroke-width="1.6"/><line x1="7.90" y1="291.56" x2="539.20" y2="291.56" stroke="#a6a6a6" stroke-width="1.6"/><line x1="7.90" y1="300.19" x2="539.20" y2="300.19" stroke="#a6a6a6" stroke-width="1.6"/><line x1="7.90" y1="308.82" x2="539.20" y2="308.82" stroke="#a6a6a6" stroke-width="1.6"/><line x1="7.90" y1="317.45" x2="539.20" y2="317.45" stroke="#a6a6a6" stroke-width="1.6"/><line x1="7.90" y1="326.08" x2="539.20" y2="326.08" stroke="#a6a6a6" stroke-width="1.6"/><line x1="7.90" y1="334.71" x2="539.20" y2="334.71" stroke="#a6a6a6" stroke-width="1.6"/><line x1="7.90" y1="343.34" x2="539.20" y2="343.34" stroke="#a6a6a6" stroke-width="1.6"/><line x1="7.90" y1="351.97" x2="539.20" y2="351.97" stroke="#a6a6a6" stroke-width="1.6"/><line x1="7.90" y1="360.60" x2="539.20" y2="360.60" stroke="#a6a6a6" stroke-width="1.6"/><line x1="7.90" y1="369.23" x2="539.20" y2="369.23" stroke="#a6a6a6" stroke-width="1.6"/><line x1="7.90" y1="377.87" x2="539.20" y2="377.87" stroke="#a6a6a6" stroke-width="1.6"/><line x1="7.90" y1="386.50" x2="539.20" y2="386.50" stroke="#a6a6a6" stroke-width="1.6"/><line x1="219.40" y1="395.20" x2="539.20" y2="395.20" stroke="#a6a6a6" stroke-width="1.6"/><line x1="8.70" y1="171.25" x2="8.70" y2="387.15" stroke="#b0b0b0" stroke-width="1.3"/><line x1="35.40" y1="171.22" x2="35.40" y2="387.17" stroke="#8e8e8e" stroke-width="1.35"/><line x1="117.10" y1="193.52" x2="117.10" y2="387.17" stroke="#8e8e8e" stroke-width="1.35"/><line x1="174.20" y1="171.22" x2="174.20" y2="387.17" stroke="#8e8e8e" stroke-width="1.35"/><line x1="220.20" y1="171.22" x2="220.20" y2="395.88" stroke="#8e8e8e" stroke-width="1.35"/><line x1="256.30" y1="193.52" x2="256.30" y2="395.88" stroke="#8e8e8e" stroke-width="1.35"/><line x1="292.40" y1="205.72" x2="292.40" y2="395.88" stroke="#8e8e8e" stroke-width="1.35"/><line x1="329.40" y1="171.22" x2="329.40" y2="395.88" stroke="#8e8e8e" stroke-width="1.35"/><line x1="370.40" y1="171.22" x2="370.40" y2="395.88" stroke="#8e8e8e" stroke-width="1.35"/><line x1="410.90" y1="171.22" x2="410.90" y2="395.88" stroke="#8e8e8e" stroke-width="1.35"/><line x1="461.50" y1="193.52" x2="461.50" y2="395.88" stroke="#8e8e8e" stroke-width="1.35"/><line x1="498.40" y1="205.72" x2="498.40" y2="395.88" stroke="#8e8e8e" stroke-width="1.35"/><line x1="538.40" y1="171.22" x2="538.40" y2="395.88" stroke="#8e8e8e" stroke-width="1.35"/></svg>
</body></html>
